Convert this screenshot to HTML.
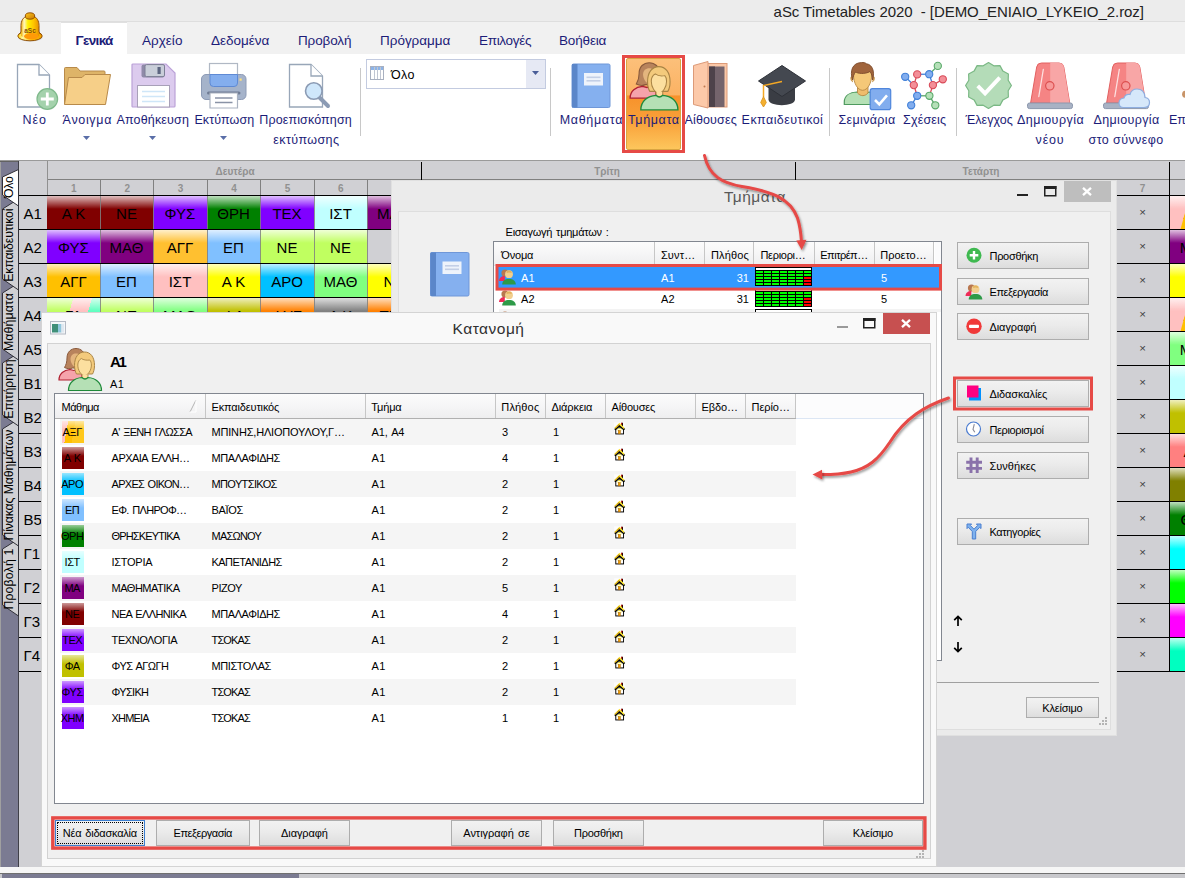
<!DOCTYPE html>
<html lang="el"><head><meta charset="utf-8"><title>aSc Timetables 2020</title><style>
html,body{margin:0;padding:0;}
body{width:1185px;height:878px;overflow:hidden;position:relative;background:#d0d0d4;font-family:"Liberation Sans",sans-serif;}
.a{position:absolute;box-sizing:border-box;}
.t{position:absolute;white-space:nowrap;font-family:"Liberation Sans",sans-serif;}
svg{position:absolute;overflow:visible;}

.cell{position:absolute;box-sizing:border-box;overflow:hidden;}
.btn{position:absolute;box-sizing:border-box;border:1px solid #adadad;background:linear-gradient(#f2f2f2,#ebebeb 45%,#dddddd 100%);}
.hdr{position:absolute;box-sizing:border-box;background:linear-gradient(#fcfcfc,#f5f5f6 55%,#eeeeef);border-right:1px solid #c6c6c6;}
</style></head><body>
<div class="a " style="left:0px;top:0px;width:1185px;height:22px;background:#ececec;"></div><div class="a " style="left:0px;top:22px;width:1185px;height:32px;background:#f1f1f1;"></div><div class="a " style="left:0px;top:21px;width:1185px;height:1px;background:#dedede;"></div><div class="a " style="left:61px;top:22px;width:66px;height:33px;background:#ffffff;border-top:1px solid #e0e0e0;"></div><div class="a " style="left:0px;top:54px;width:1185px;height:106px;background:#ffffff;"></div><span class="t" style="top:4.20px;font-size:15px;line-height:15px;color:#222;letter-spacing:-0.059px;left:773.60px;white-space:pre;">aSc Timetables 2020  - [DEMO_ENIAIO_LYKEIO_2.roz]</span><span class="t" style="top:34.27px;font-size:13.5px;line-height:13.5px;color:#1c1c78;font-weight:bold;letter-spacing:-0.674px;left:75.60px;">Γενικά</span><span class="t" style="top:34.27px;font-size:13.5px;line-height:13.5px;color:#1c1c78;letter-spacing:0.021px;left:142.00px;">Αρχείο</span><span class="t" style="top:34.27px;font-size:13.5px;line-height:13.5px;color:#1c1c78;left:211.00px;">Δεδομένα</span><span class="t" style="top:34.27px;font-size:13.5px;line-height:13.5px;color:#1c1c78;letter-spacing:-0.136px;left:298.00px;">Προβολή</span><span class="t" style="top:34.27px;font-size:13.5px;line-height:13.5px;color:#1c1c78;letter-spacing:-0.018px;left:380.00px;">Πρόγραμμα</span><span class="t" style="top:34.27px;font-size:13.5px;line-height:13.5px;color:#1c1c78;letter-spacing:-0.322px;left:479.00px;">Επιλογές</span><span class="t" style="top:34.27px;font-size:13.5px;line-height:13.5px;color:#1c1c78;letter-spacing:-0.160px;left:559.00px;">Βοήθεια</span><div class="a" style="left:626px;top:58px;width:55px;height:92px;border:1px solid #d9a441;border-radius:2px;background:linear-gradient(#fcc07a 0%,#fbb263 40%,#f7922b 41%,#f9a13a 70%,#fdc65c 100%);"></div><span class="t" style="top:114.32px;font-size:12.5px;line-height:12.5px;color:#1c1c78;letter-spacing:0.919px;left:22.50px;">Νέο</span><span class="t" style="top:114.32px;font-size:12.5px;line-height:12.5px;color:#1c1c78;letter-spacing:0.670px;left:62.60px;">Άνοιγμα</span><span class="t" style="top:114.32px;font-size:12.5px;line-height:12.5px;color:#1c1c78;letter-spacing:0.159px;left:116.50px;">Αποθήκευση</span><span class="t" style="top:114.32px;font-size:12.5px;line-height:12.5px;color:#1c1c78;letter-spacing:0.079px;left:194.40px;">Εκτύπωση</span><span class="t" style="top:114.32px;font-size:12.5px;line-height:12.5px;color:#1c1c78;letter-spacing:0.124px;left:259.30px;">Προεπισκόπηση</span><span class="t" style="top:133.62px;font-size:12.5px;line-height:12.5px;color:#1c1c78;letter-spacing:0.400px;left:273.30px;">εκτύπωσης</span><span class="t" style="top:114.32px;font-size:12.5px;line-height:12.5px;color:#1c1c78;letter-spacing:0.676px;left:559.70px;">Μαθήματα</span><span class="t" style="top:114.32px;font-size:12.5px;line-height:12.5px;color:#1c1c78;letter-spacing:0.617px;left:628.00px;">Τμήματα</span><span class="t" style="top:114.32px;font-size:12.5px;line-height:12.5px;color:#1c1c78;letter-spacing:0.147px;left:684.50px;">Αίθουσες</span><span class="t" style="top:114.32px;font-size:12.5px;line-height:12.5px;color:#1c1c78;letter-spacing:0.446px;left:741.60px;">Εκπαιδευτικοί</span><span class="t" style="top:114.32px;font-size:12.5px;line-height:12.5px;color:#1c1c78;letter-spacing:0.353px;left:838.50px;">Σεμινάρια</span><span class="t" style="top:114.32px;font-size:12.5px;line-height:12.5px;color:#1c1c78;letter-spacing:0.191px;left:903.00px;">Σχέσεις</span><span class="t" style="top:114.32px;font-size:12.5px;line-height:12.5px;color:#1c1c78;letter-spacing:0.070px;left:965.40px;">Έλεγχος</span><span class="t" style="top:114.32px;font-size:12.5px;line-height:12.5px;color:#1c1c78;letter-spacing:0.474px;left:1017.00px;">Δημιουργία</span><span class="t" style="top:133.62px;font-size:12.5px;line-height:12.5px;color:#1c1c78;letter-spacing:0.825px;left:1035.60px;">νέου</span><span class="t" style="top:114.32px;font-size:12.5px;line-height:12.5px;color:#1c1c78;letter-spacing:0.362px;left:1093.50px;">Δημιουργία</span><span class="t" style="top:133.62px;font-size:12.5px;line-height:12.5px;color:#1c1c78;letter-spacing:0.401px;left:1088.60px;">στο σύννεφο</span><span class="t" style="top:114.32px;font-size:12.5px;line-height:12.5px;color:#1c1c78;left:1169.00px;">Επεξεργασία</span><svg style="left:83.0px;top:135.5px" width="7" height="4"><path d="M0 0H7L3.5 4Z" fill="#5a6ea8"/></svg><svg style="left:149.0px;top:135.5px" width="7" height="4"><path d="M0 0H7L3.5 4Z" fill="#5a6ea8"/></svg><svg style="left:220.0px;top:135.5px" width="7" height="4"><path d="M0 0H7L3.5 4Z" fill="#5a6ea8"/></svg><div class="a " style="left:359.5px;top:68px;width:1px;height:68px;background:#c8c8c8;"></div><div class="a " style="left:550px;top:68px;width:1px;height:68px;background:#c8c8c8;"></div><div class="a " style="left:829px;top:68px;width:1px;height:68px;background:#c8c8c8;"></div><div class="a " style="left:955.5px;top:68px;width:1px;height:68px;background:#c8c8c8;"></div><div class="a" style="left:366px;top:59px;width:180px;height:30px;border:1px solid #c3cbe0;background:#fff;"></div><div class="a" style="left:526px;top:60px;width:19px;height:28px;background:#e6e9f4;"></div><svg style="left:532px;top:71px" width="7" height="4"><path d="M0 0H7L3.5 4Z" fill="#4a5e98"/></svg><svg style="left:370px;top:66px" width="14" height="14"><rect x="0.5" y="0.5" width="13" height="13" fill="#fff" stroke="#a8b0c0"/><rect x="1" y="1" width="12" height="3" fill="#8cb4e8"/><path d="M4.5 1V13M7.5 1V13M10.5 1V13" stroke="#c0c6d2" stroke-width="1"/></svg><span class="t" style="top:69.12px;font-size:12.5px;line-height:12.5px;color:#000;letter-spacing:0.348px;left:391.00px;">Όλο</span><div class="a " style="left:0px;top:160px;width:1185px;height:1px;background:#9a9a9a;"></div><div class="a " style="left:0px;top:161px;width:1185px;height:1px;background:#626262;"></div><div class="a " style="left:0px;top:162px;width:1px;height:705px;background:#a0a0a0;"></div><div class="a " style="left:1px;top:162px;width:17px;height:705px;background:#7b7b92;"></div><div class="a " style="left:18px;top:161px;width:1px;height:706px;background:#404048;"></div><div class="a " style="left:19px;top:161px;width:28px;height:706px;background:#d0d0d4;"></div><div class="a " style="left:47px;top:161px;width:1138px;height:18px;background:#d0d0d4;"></div><div class="a " style="left:47px;top:179px;width:1138px;height:1px;background:#808080;"></div><div class="a " style="left:47px;top:180px;width:1138px;height:15px;background:#d0d0d4;"></div><div class="a " style="left:47px;top:161px;width:1px;height:34px;background:#909090;"></div><div class="a " style="left:421px;top:162px;width:1px;height:18px;background:#000;"></div><div class="a " style="left:795px;top:162px;width:1px;height:18px;background:#000;"></div><div class="a " style="left:1169px;top:162px;width:1px;height:18px;background:#000;"></div><span class="t" style="top:167.23px;font-size:10px;line-height:10px;color:#909090;font-weight:bold;left:-15.00px;width:500px;text-align:center;">Δευτέρα</span><span class="t" style="top:167.23px;font-size:10px;line-height:10px;color:#909090;font-weight:bold;left:357.00px;width:500px;text-align:center;">Τρίτη</span><span class="t" style="top:167.23px;font-size:10px;line-height:10px;color:#909090;font-weight:bold;left:731.00px;width:500px;text-align:center;">Τετάρτη</span><span class="t" style="top:183.73px;font-size:10px;line-height:10px;color:#909090;font-weight:bold;left:-176.28px;width:500px;text-align:center;">1</span><div class="a " style="left:100px;top:180px;width:1px;height:15px;background:#808080;"></div><span class="t" style="top:183.73px;font-size:10px;line-height:10px;color:#909090;font-weight:bold;left:-122.85px;width:500px;text-align:center;">2</span><div class="a " style="left:153px;top:180px;width:1px;height:15px;background:#808080;"></div><span class="t" style="top:183.73px;font-size:10px;line-height:10px;color:#909090;font-weight:bold;left:-69.42px;width:500px;text-align:center;">3</span><div class="a " style="left:207px;top:180px;width:1px;height:15px;background:#808080;"></div><span class="t" style="top:183.73px;font-size:10px;line-height:10px;color:#909090;font-weight:bold;left:-16.00px;width:500px;text-align:center;">4</span><div class="a " style="left:260px;top:180px;width:1px;height:15px;background:#808080;"></div><span class="t" style="top:183.73px;font-size:10px;line-height:10px;color:#909090;font-weight:bold;left:37.44px;width:500px;text-align:center;">5</span><div class="a " style="left:314px;top:180px;width:1px;height:15px;background:#808080;"></div><span class="t" style="top:183.73px;font-size:10px;line-height:10px;color:#909090;font-weight:bold;left:90.86px;width:500px;text-align:center;">6</span><div class="a " style="left:367px;top:180px;width:1px;height:15px;background:#808080;"></div><span class="t" style="top:183.73px;font-size:10px;line-height:10px;color:#909090;font-weight:bold;left:892.50px;width:500px;text-align:center;">7</span><div class="cell" style="left:47.00px;top:196px;width:53.00px;height:33px;background:linear-gradient(rgba(255,255,255,0.75) 0px,rgba(255,255,255,0.0) 13px),#800000;"></div><span class="t" style="top:206.10px;font-size:15px;line-height:15px;color:#000;left:-176.50px;width:500px;text-align:center;">Α Κ</span><div class="cell" style="left:100.00px;top:196px;width:53.00px;height:33px;background:linear-gradient(rgba(255,255,255,0.75) 0px,rgba(255,255,255,0.0) 13px),#800000;"></div><span class="t" style="top:206.10px;font-size:15px;line-height:15px;color:#000;left:-123.50px;width:500px;text-align:center;">ΝΕ</span><div class="cell" style="left:153.00px;top:196px;width:54.00px;height:33px;background:linear-gradient(rgba(255,255,255,0.75) 0px,rgba(255,255,255,0.0) 13px),#8000ff;"></div><span class="t" style="top:206.10px;font-size:15px;line-height:15px;color:#000;left:-70.00px;width:500px;text-align:center;">ΦΥΣ</span><div class="cell" style="left:207.00px;top:196px;width:53.00px;height:33px;background:linear-gradient(rgba(255,255,255,0.75) 0px,rgba(255,255,255,0.0) 13px),#008000;"></div><span class="t" style="top:206.10px;font-size:15px;line-height:15px;color:#000;left:-16.50px;width:500px;text-align:center;">ΘΡΗ</span><div class="cell" style="left:260.00px;top:196px;width:54.00px;height:33px;background:linear-gradient(rgba(255,255,255,0.75) 0px,rgba(255,255,255,0.0) 13px),#8000ff;"></div><span class="t" style="top:206.10px;font-size:15px;line-height:15px;color:#000;left:37.00px;width:500px;text-align:center;">ΤΕΧ</span><div class="cell" style="left:314.00px;top:196px;width:53.00px;height:33px;background:linear-gradient(rgba(255,255,255,0.75) 0px,rgba(255,255,255,0.0) 13px),#c0ffff;"></div><span class="t" style="top:206.10px;font-size:15px;line-height:15px;color:#000;left:90.50px;width:500px;text-align:center;">ΙΣΤ</span><div class="cell" style="left:367.00px;top:196px;width:54.00px;height:33px;background:linear-gradient(rgba(255,255,255,0.75) 0px,rgba(255,255,255,0.0) 13px),#800080;"></div><span class="t" style="top:206.10px;font-size:15px;line-height:15px;color:#000;left:144.00px;width:500px;text-align:center;">ΜΑΘ</span><div class="a " style="left:100px;top:196px;width:1px;height:33px;background:rgba(128,128,128,0.85);"></div><div class="a " style="left:153px;top:196px;width:1px;height:33px;background:rgba(128,128,128,0.85);"></div><div class="a " style="left:207px;top:196px;width:1px;height:33px;background:rgba(128,128,128,0.85);"></div><div class="a " style="left:260px;top:196px;width:1px;height:33px;background:rgba(128,128,128,0.85);"></div><div class="a " style="left:314px;top:196px;width:1px;height:33px;background:rgba(128,128,128,0.85);"></div><div class="a " style="left:367px;top:196px;width:1px;height:33px;background:rgba(128,128,128,0.85);"></div><div class="cell" style="left:47.00px;top:230px;width:53.00px;height:33px;background:linear-gradient(rgba(255,255,255,0.75) 0px,rgba(255,255,255,0.0) 13px),#8000ff;"></div><span class="t" style="top:240.10px;font-size:15px;line-height:15px;color:#000;left:-176.50px;width:500px;text-align:center;">ΦΥΣ</span><div class="cell" style="left:100.00px;top:230px;width:53.00px;height:33px;background:linear-gradient(rgba(255,255,255,0.75) 0px,rgba(255,255,255,0.0) 13px),#800080;"></div><span class="t" style="top:240.10px;font-size:15px;line-height:15px;color:#000;left:-123.50px;width:500px;text-align:center;">ΜΑΘ</span><div class="cell" style="left:153.00px;top:230px;width:54.00px;height:33px;background:linear-gradient(rgba(255,255,255,0.75) 0px,rgba(255,255,255,0.0) 13px),#ffc030;"></div><span class="t" style="top:240.10px;font-size:15px;line-height:15px;color:#000;left:-70.00px;width:500px;text-align:center;">ΑΓΓ</span><div class="cell" style="left:207.00px;top:230px;width:53.00px;height:33px;background:linear-gradient(rgba(255,255,255,0.75) 0px,rgba(255,255,255,0.0) 13px),#80c0ff;"></div><span class="t" style="top:240.10px;font-size:15px;line-height:15px;color:#000;left:-16.50px;width:500px;text-align:center;">ΕΠ</span><div class="cell" style="left:260.00px;top:230px;width:54.00px;height:33px;background:linear-gradient(rgba(255,255,255,0.75) 0px,rgba(255,255,255,0.0) 13px),#c0ff60;"></div><span class="t" style="top:240.10px;font-size:15px;line-height:15px;color:#000;left:37.00px;width:500px;text-align:center;">ΝΕ</span><div class="cell" style="left:314.00px;top:230px;width:53.00px;height:33px;background:linear-gradient(rgba(255,255,255,0.75) 0px,rgba(255,255,255,0.0) 13px),#c0ff60;"></div><span class="t" style="top:240.10px;font-size:15px;line-height:15px;color:#000;left:90.50px;width:500px;text-align:center;">ΝΕ</span><div class="a " style="left:100px;top:230px;width:1px;height:33px;background:rgba(128,128,128,0.85);"></div><div class="a " style="left:153px;top:230px;width:1px;height:33px;background:rgba(128,128,128,0.85);"></div><div class="a " style="left:207px;top:230px;width:1px;height:33px;background:rgba(128,128,128,0.85);"></div><div class="a " style="left:260px;top:230px;width:1px;height:33px;background:rgba(128,128,128,0.85);"></div><div class="a " style="left:314px;top:230px;width:1px;height:33px;background:rgba(128,128,128,0.85);"></div><div class="a " style="left:367px;top:230px;width:1px;height:33px;background:rgba(128,128,128,0.85);"></div><div class="cell" style="left:47.00px;top:264px;width:53.00px;height:33px;background:linear-gradient(rgba(255,255,255,0.75) 0px,rgba(255,255,255,0.0) 13px),#ffc000;"></div><span class="t" style="top:274.10px;font-size:15px;line-height:15px;color:#000;left:-176.50px;width:500px;text-align:center;">ΑΓΓ</span><div class="cell" style="left:100.00px;top:264px;width:53.00px;height:33px;background:linear-gradient(rgba(255,255,255,0.75) 0px,rgba(255,255,255,0.0) 13px),#80c0ff;"></div><span class="t" style="top:274.10px;font-size:15px;line-height:15px;color:#000;left:-123.50px;width:500px;text-align:center;">ΕΠ</span><div class="cell" style="left:153.00px;top:264px;width:54.00px;height:33px;background:linear-gradient(rgba(255,255,255,0.75) 0px,rgba(255,255,255,0.0) 13px),#ffc0c0;"></div><span class="t" style="top:274.10px;font-size:15px;line-height:15px;color:#000;left:-70.00px;width:500px;text-align:center;">ΙΣΤ</span><div class="cell" style="left:207.00px;top:264px;width:53.00px;height:33px;background:linear-gradient(rgba(255,255,255,0.75) 0px,rgba(255,255,255,0.0) 13px),#ffff00;"></div><span class="t" style="top:274.10px;font-size:15px;line-height:15px;color:#000;left:-16.50px;width:500px;text-align:center;">Α Κ</span><div class="cell" style="left:260.00px;top:264px;width:54.00px;height:33px;background:linear-gradient(rgba(255,255,255,0.75) 0px,rgba(255,255,255,0.0) 13px),#00c0ff;"></div><span class="t" style="top:274.10px;font-size:15px;line-height:15px;color:#000;left:37.00px;width:500px;text-align:center;">ΑΡΟ</span><div class="cell" style="left:314.00px;top:264px;width:53.00px;height:33px;background:linear-gradient(rgba(255,255,255,0.75) 0px,rgba(255,255,255,0.0) 13px),#80ff80;"></div><span class="t" style="top:274.10px;font-size:15px;line-height:15px;color:#000;left:90.50px;width:500px;text-align:center;">ΜΑΘ</span><div class="cell" style="left:367.00px;top:264px;width:54.00px;height:33px;background:linear-gradient(rgba(255,255,255,0.75) 0px,rgba(255,255,255,0.0) 13px),#ffff00;"></div><span class="t" style="top:274.10px;font-size:15px;line-height:15px;color:#000;left:144.00px;width:500px;text-align:center;">ΝΕ</span><div class="a " style="left:100px;top:264px;width:1px;height:33px;background:rgba(128,128,128,0.85);"></div><div class="a " style="left:153px;top:264px;width:1px;height:33px;background:rgba(128,128,128,0.85);"></div><div class="a " style="left:207px;top:264px;width:1px;height:33px;background:rgba(128,128,128,0.85);"></div><div class="a " style="left:260px;top:264px;width:1px;height:33px;background:rgba(128,128,128,0.85);"></div><div class="a " style="left:314px;top:264px;width:1px;height:33px;background:rgba(128,128,128,0.85);"></div><div class="a " style="left:367px;top:264px;width:1px;height:33px;background:rgba(128,128,128,0.85);"></div><div class="cell" style="left:47.00px;top:298px;width:53.00px;height:33px;background:linear-gradient(rgba(255,255,255,0.75) 0px,rgba(255,255,255,0) 13px),linear-gradient(106deg,#c0ff60 0,#c0ff60 42%,#ffc0c0 42%,#ffc0c0 72%,#60ffc0 72%);"></div><span class="t" style="top:308.10px;font-size:15px;line-height:15px;color:#000;left:-176.50px;width:500px;text-align:center;">ΓΑ</span><div class="cell" style="left:100.00px;top:298px;width:53.00px;height:33px;background:linear-gradient(rgba(255,255,255,0.75) 0px,rgba(255,255,255,0.0) 13px),#c0ff60;"></div><span class="t" style="top:308.10px;font-size:15px;line-height:15px;color:#000;left:-123.50px;width:500px;text-align:center;">ΝΕ</span><div class="cell" style="left:153.00px;top:298px;width:54.00px;height:33px;background:linear-gradient(rgba(255,255,255,0.75) 0px,rgba(255,255,255,0.0) 13px),#80ff80;"></div><span class="t" style="top:308.10px;font-size:15px;line-height:15px;color:#000;left:-70.00px;width:500px;text-align:center;">ΜΑΘ</span><div class="cell" style="left:207.00px;top:298px;width:53.00px;height:33px;background:linear-gradient(rgba(255,255,255,0.75) 0px,rgba(255,255,255,0.0) 13px),#c0c000;"></div><span class="t" style="top:308.10px;font-size:15px;line-height:15px;color:#000;left:-16.50px;width:500px;text-align:center;">ΦΑ</span><div class="cell" style="left:260.00px;top:298px;width:54.00px;height:33px;background:linear-gradient(rgba(255,255,255,0.75) 0px,rgba(255,255,255,0.0) 13px),#ff8000;"></div><span class="t" style="top:308.10px;font-size:15px;line-height:15px;color:#000;left:37.00px;width:500px;text-align:center;">ΦΥΣ</span><div class="cell" style="left:314.00px;top:298px;width:53.00px;height:33px;background:linear-gradient(rgba(255,255,255,0.75) 0px,rgba(255,255,255,0.0) 13px),#808080;"></div><span class="t" style="top:308.10px;font-size:15px;line-height:15px;color:#000;left:90.50px;width:500px;text-align:center;">Α Κ</span><div class="cell" style="left:367.00px;top:298px;width:54.00px;height:33px;background:linear-gradient(rgba(255,255,255,0.75) 0px,rgba(255,255,255,0.0) 13px),#ff8000;"></div><span class="t" style="top:308.10px;font-size:15px;line-height:15px;color:#000;left:144.00px;width:500px;text-align:center;">ΤΕΧ</span><div class="a " style="left:100px;top:298px;width:1px;height:33px;background:rgba(128,128,128,0.85);"></div><div class="a " style="left:153px;top:298px;width:1px;height:33px;background:rgba(128,128,128,0.85);"></div><div class="a " style="left:207px;top:298px;width:1px;height:33px;background:rgba(128,128,128,0.85);"></div><div class="a " style="left:260px;top:298px;width:1px;height:33px;background:rgba(128,128,128,0.85);"></div><div class="a " style="left:314px;top:298px;width:1px;height:33px;background:rgba(128,128,128,0.85);"></div><div class="a " style="left:367px;top:298px;width:1px;height:33px;background:rgba(128,128,128,0.85);"></div><div class="cell" style="left:1170.00px;top:196px;width:53.43px;height:33px;background:linear-gradient(rgba(255,255,255,0.75) 0px,rgba(255,255,255,0.0) 13px),#ffc0c0;"></div><span class="t" style="top:206.10px;font-size:15px;line-height:15px;color:#000;left:946.71px;width:500px;text-align:center;">ΑΓΓ</span><span class="t" style="top:206.77px;font-size:11.5px;line-height:11.5px;color:#404040;left:892.50px;width:500px;text-align:center;">×</span><div class="cell" style="left:1170.00px;top:230px;width:53.43px;height:33px;background:linear-gradient(rgba(255,255,255,0.75) 0px,rgba(255,255,255,0.0) 13px),#800080;"></div><span class="t" style="top:240.10px;font-size:15px;line-height:15px;color:#000;left:946.71px;width:500px;text-align:center;">ΜΑΘ</span><span class="t" style="top:240.77px;font-size:11.5px;line-height:11.5px;color:#404040;left:892.50px;width:500px;text-align:center;">×</span><div class="cell" style="left:1170.00px;top:264px;width:53.43px;height:33px;background:linear-gradient(rgba(255,255,255,0.75) 0px,rgba(255,255,255,0.0) 13px),#ffff00;"></div><span class="t" style="top:274.77px;font-size:11.5px;line-height:11.5px;color:#404040;left:892.50px;width:500px;text-align:center;">×</span><div class="cell" style="left:1170.00px;top:298px;width:53.43px;height:33px;background:linear-gradient(rgba(255,255,255,0.75) 0px,rgba(255,255,255,0.0) 13px),#ffc0c0;"></div><span class="t" style="top:308.10px;font-size:15px;line-height:15px;color:#000;left:946.71px;width:500px;text-align:center;">ΑΓΓ</span><span class="t" style="top:308.77px;font-size:11.5px;line-height:11.5px;color:#404040;left:892.50px;width:500px;text-align:center;">×</span><div class="cell" style="left:1170.00px;top:332px;width:53.43px;height:33px;background:linear-gradient(rgba(255,255,255,0.75) 0px,rgba(255,255,255,0.0) 13px),#80ff80;"></div><span class="t" style="top:342.10px;font-size:15px;line-height:15px;color:#000;left:946.71px;width:500px;text-align:center;">ΜΑΘ</span><span class="t" style="top:342.77px;font-size:11.5px;line-height:11.5px;color:#404040;left:892.50px;width:500px;text-align:center;">×</span><div class="cell" style="left:1170.00px;top:366px;width:53.43px;height:33px;background:linear-gradient(rgba(255,255,255,0.75) 0px,rgba(255,255,255,0.0) 13px),#c0ffff;"></div><span class="t" style="top:376.77px;font-size:11.5px;line-height:11.5px;color:#404040;left:892.50px;width:500px;text-align:center;">×</span><div class="cell" style="left:1170.00px;top:400px;width:53.43px;height:33px;background:linear-gradient(rgba(255,255,255,0.75) 0px,rgba(255,255,255,0.0) 13px),#c0c000;"></div><span class="t" style="top:410.77px;font-size:11.5px;line-height:11.5px;color:#404040;left:892.50px;width:500px;text-align:center;">×</span><div class="cell" style="left:1170.00px;top:434px;width:53.43px;height:33px;background:linear-gradient(rgba(255,255,255,0.75) 0px,rgba(255,255,255,0.0) 13px),#ff8080;"></div><span class="t" style="top:444.10px;font-size:15px;line-height:15px;color:#000;left:946.71px;width:500px;text-align:center;">ΑΓΓ</span><span class="t" style="top:444.77px;font-size:11.5px;line-height:11.5px;color:#404040;left:892.50px;width:500px;text-align:center;">×</span><div class="cell" style="left:1170.00px;top:468px;width:53.43px;height:33px;background:linear-gradient(rgba(255,255,255,0.75) 0px,rgba(255,255,255,0.0) 13px),#808000;"></div><span class="t" style="top:478.77px;font-size:11.5px;line-height:11.5px;color:#404040;left:892.50px;width:500px;text-align:center;">×</span><div class="cell" style="left:1170.00px;top:502px;width:53.43px;height:33px;background:linear-gradient(rgba(255,255,255,0.75) 0px,rgba(255,255,255,0.0) 13px),#008000;"></div><span class="t" style="top:512.10px;font-size:15px;line-height:15px;color:#000;left:946.71px;width:500px;text-align:center;">ΘΡΗ</span><span class="t" style="top:512.77px;font-size:11.5px;line-height:11.5px;color:#404040;left:892.50px;width:500px;text-align:center;">×</span><div class="cell" style="left:1170.00px;top:536px;width:53.43px;height:33px;background:linear-gradient(rgba(255,255,255,0.75) 0px,rgba(255,255,255,0.0) 13px),#00ffff;"></div><span class="t" style="top:546.77px;font-size:11.5px;line-height:11.5px;color:#404040;left:892.50px;width:500px;text-align:center;">×</span><div class="cell" style="left:1170.00px;top:570px;width:53.43px;height:33px;background:linear-gradient(rgba(255,255,255,0.75) 0px,rgba(255,255,255,0.0) 13px),#00ff00;"></div><span class="t" style="top:580.77px;font-size:11.5px;line-height:11.5px;color:#404040;left:892.50px;width:500px;text-align:center;">×</span><div class="cell" style="left:1170.00px;top:604px;width:53.43px;height:33px;background:linear-gradient(rgba(255,255,255,0.75) 0px,rgba(255,255,255,0.0) 13px),#ff00ff;"></div><span class="t" style="top:614.77px;font-size:11.5px;line-height:11.5px;color:#404040;left:892.50px;width:500px;text-align:center;">×</span><div class="cell" style="left:1170.00px;top:638px;width:53.43px;height:33px;background:linear-gradient(rgba(255,255,255,0.75) 0px,rgba(255,255,255,0.0) 13px),#00ffc0;"></div><span class="t" style="top:648.77px;font-size:11.5px;line-height:11.5px;color:#404040;left:892.50px;width:500px;text-align:center;">×</span><svg style="left:1170px;top:196px" width="15" height="33"><path d="M15 17L15 33L10.500 33Z" fill="#ffc000"/></svg><svg style="left:1170px;top:298px" width="15" height="33"><path d="M15 17L15 33L10.500 33Z" fill="#ffc000"/></svg><div class="a " style="left:1169px;top:180px;width:1px;height:492px;background:#000;"></div><div class="a " style="left:19px;top:195px;width:1166px;height:1px;background:#000;"></div><div class="a " style="left:19px;top:229px;width:1166px;height:1px;background:#000;"></div><div class="a " style="left:19px;top:263px;width:1166px;height:1px;background:#000;"></div><div class="a " style="left:19px;top:297px;width:1166px;height:1px;background:#000;"></div><div class="a " style="left:19px;top:331px;width:1166px;height:1px;background:#000;"></div><div class="a " style="left:19px;top:365px;width:1166px;height:1px;background:#000;"></div><div class="a " style="left:19px;top:399px;width:1166px;height:1px;background:#000;"></div><div class="a " style="left:19px;top:433px;width:1166px;height:1px;background:#000;"></div><div class="a " style="left:19px;top:467px;width:1166px;height:1px;background:#000;"></div><div class="a " style="left:19px;top:501px;width:1166px;height:1px;background:#000;"></div><div class="a " style="left:19px;top:535px;width:1166px;height:1px;background:#000;"></div><div class="a " style="left:19px;top:569px;width:1166px;height:1px;background:#000;"></div><div class="a " style="left:19px;top:603px;width:1166px;height:1px;background:#000;"></div><div class="a " style="left:19px;top:637px;width:1166px;height:1px;background:#000;"></div><div class="a " style="left:19px;top:671px;width:1166px;height:1px;background:#000;"></div><span class="t" style="top:206.00px;font-size:15px;line-height:15px;color:#000;left:23.50px;">Α1</span><span class="t" style="top:240.00px;font-size:15px;line-height:15px;color:#000;left:23.50px;">Α2</span><span class="t" style="top:274.00px;font-size:15px;line-height:15px;color:#000;left:23.50px;">Α3</span><span class="t" style="top:308.00px;font-size:15px;line-height:15px;color:#000;left:23.50px;">Α4</span><span class="t" style="top:342.00px;font-size:15px;line-height:15px;color:#000;left:23.50px;">Α5</span><span class="t" style="top:376.00px;font-size:15px;line-height:15px;color:#000;left:23.50px;">Β1</span><span class="t" style="top:410.00px;font-size:15px;line-height:15px;color:#000;left:23.50px;">Β2</span><span class="t" style="top:444.00px;font-size:15px;line-height:15px;color:#000;left:23.50px;">Β3</span><span class="t" style="top:478.00px;font-size:15px;line-height:15px;color:#000;left:23.50px;">Β4</span><span class="t" style="top:512.00px;font-size:15px;line-height:15px;color:#000;left:23.50px;">Β5</span><span class="t" style="top:546.00px;font-size:15px;line-height:15px;color:#000;left:23.50px;">Γ1</span><span class="t" style="top:580.00px;font-size:15px;line-height:15px;color:#000;left:23.50px;">Γ2</span><span class="t" style="top:614.00px;font-size:15px;line-height:15px;color:#000;left:23.50px;">Γ3</span><span class="t" style="top:648.00px;font-size:15px;line-height:15px;color:#000;left:23.50px;">Γ4</span><div class="a " style="left:47px;top:672px;width:1138px;height:195px;background:#d0d0d4;"></div><div class="a " style="left:0px;top:867px;width:1185px;height:6px;background:#f6f6f6;"></div><div class="a " style="left:0px;top:872.5px;width:1185px;height:1px;background:#707070;"></div><div class="a " style="left:0px;top:873.5px;width:1185px;height:5px;background:#c8c8cc;"></div><div class="a " style="left:1.5px;top:873.5px;width:297.5px;height:5px;background:#7b7b92;"></div><svg style="left:0;top:0" width="20" height="878"><path d="M18.5 539L2.5 549L2.5 605L18.5 616Z" fill="#d0d0d4" stroke="#303038" stroke-width="1"/><path d="M18.5 419L2.5 429L2.5 535L18.5 546Z" fill="#d0d0d4" stroke="#303038" stroke-width="1"/><path d="M18.5 353L2.5 363L2.5 415L18.5 426Z" fill="#d0d0d4" stroke="#303038" stroke-width="1"/><path d="M18.5 283L2.5 293L2.5 349L18.5 360Z" fill="#d0d0d4" stroke="#303038" stroke-width="1"/><path d="M18.5 199L2.5 209L2.5 279L18.5 290Z" fill="#d0d0d4" stroke="#303038" stroke-width="1"/><path d="M18.5 169.5L2.5 177L2.5 195L18.5 206Z" fill="#ffffff" stroke="#303038" stroke-width="1"/></svg><span class="t" style="top:181.10px;font-size:12.3px;line-height:12.3px;color:#000;letter-spacing:-0.214px;left:-240.60px;width:500px;text-align:center;text-indent:-0.214px;transform:rotate(-90deg);transform-origin:50% 50%;">Όλο</span><span class="t" style="top:239.35px;font-size:12.3px;line-height:12.3px;color:#000;letter-spacing:-0.110px;left:-240.60px;width:500px;text-align:center;text-indent:-0.110px;transform:rotate(-90deg);transform-origin:50% 50%;">Εκπαιδευτικοί</span><span class="t" style="top:315.60px;font-size:12.3px;line-height:12.3px;color:#000;letter-spacing:0.124px;left:-240.60px;width:500px;text-align:center;text-indent:0.124px;transform:rotate(-90deg);transform-origin:50% 50%;">Μαθήματα</span><span class="t" style="top:383.35px;font-size:12.3px;line-height:12.3px;color:#000;left:-240.60px;width:500px;text-align:center;text-indent:0.001px;transform:rotate(-90deg);transform-origin:50% 50%;">Επιτήρηση</span><span class="t" style="top:479.10px;font-size:12.3px;line-height:12.3px;color:#000;letter-spacing:-0.130px;left:-240.60px;width:500px;text-align:center;text-indent:-0.130px;transform:rotate(-90deg);transform-origin:50% 50%;">Πίνακας Μαθημάτων</span><span class="t" style="top:573.10px;font-size:12.3px;line-height:12.3px;color:#000;letter-spacing:0.157px;left:-240.60px;width:500px;text-align:center;text-indent:0.157px;transform:rotate(-90deg);transform-origin:50% 50%;">Προβολή 1</span><div class="a" style="left:391px;top:180px;width:726px;height:556px;background:#ebebeb;border:1px solid #e0e0e0;box-shadow:0 0 0 0 #000;"></div><div class="a" style="left:398px;top:211px;width:713px;height:519px;background:#f0f0f0;border:1px solid #dedede;"></div><span class="t" style="top:188.58px;font-size:15.5px;line-height:15.5px;color:#585858;letter-spacing:0.460px;left:724.00px;">Τμήματα</span><div class="a " style="left:1064px;top:181px;width:47px;height:21px;background:#bebebe;"></div><svg style="left:1081px;top:186px" width="12" height="11"><path d="M2 1.800L10 9.200M10 1.800L2 9.200" stroke="#fff" stroke-width="2.300"/></svg><svg style="left:1044px;top:186px" width="13" height="11"><rect x="0.75" y="0.75" width="11" height="9" fill="none" stroke="#222" stroke-width="1.5"/><rect x="0" y="0" width="12.5" height="3" fill="#222"/></svg><div class="a " style="left:1017px;top:194px;width:11px;height:2px;background:#222;"></div><svg style="left:430px;top:252px" width="40" height="45"><rect x="0.5" y="0.5" width="38.5" height="43.5" rx="1.5" fill="#85b0ef" stroke="#6f97d8"/><rect x="0.5" y="0.5" width="5.5" height="43.5" fill="#5b86c9"/><rect x="12.5" y="9.5" width="19" height="12.5" fill="#eef3fb"/><rect x="15" y="13" width="14" height="1.6" fill="#c3cfe6"/><rect x="15" y="16.5" width="14" height="1.6" fill="#c3cfe6"/></svg><span class="t" style="top:227.09px;font-size:11.0px;line-height:11.0px;color:#000;letter-spacing:-0.266px;left:505.60px;word-spacing:1.2px;">Εισαγωγή τμημάτων :</span><div class="a" style="left:493px;top:241px;width:449px;height:420px;background:#fff;border:1px solid #828790;"></div><div class="hdr" style="left:494px;top:242px;width:160.7px;height:23px;"></div><span class="t" style="top:250.39px;font-size:11.0px;line-height:11.0px;color:#000;letter-spacing:-0.186px;left:501.30px;">Όνομα</span><div class="hdr" style="left:654.7px;top:242px;width:49.9px;height:23px;"></div><span class="t" style="top:250.39px;font-size:11.0px;line-height:11.0px;color:#000;letter-spacing:0.182px;left:660.90px;">Συντ…</span><div class="hdr" style="left:704.6px;top:242px;width:49.8px;height:23px;"></div><span class="t" style="top:250.39px;font-size:11.0px;line-height:11.0px;color:#000;letter-spacing:0.158px;left:711.00px;">Πλήθος</span><div class="hdr" style="left:754.4px;top:242px;width:60.2px;height:23px;"></div><span class="t" style="top:250.39px;font-size:11.0px;line-height:11.0px;color:#000;letter-spacing:-0.282px;left:760.40px;">Περιορι…</span><div class="hdr" style="left:814.6px;top:242px;width:60.2px;height:23px;"></div><span class="t" style="top:250.39px;font-size:11.0px;line-height:11.0px;color:#000;letter-spacing:-0.510px;left:820.30px;">Επιτρέπ…</span><div class="hdr" style="left:874.8px;top:242px;width:59.7px;height:23px;"></div><span class="t" style="top:250.39px;font-size:11.0px;line-height:11.0px;color:#000;letter-spacing:-0.022px;left:880.30px;">Προετο…</span><div class="a " style="left:934.5px;top:242px;width:6.5px;height:23px;background:#fbfbfc;"></div><div class="a " style="left:494px;top:265px;width:447px;height:1px;background:#e0e4ea;"></div><div class="a " style="left:496px;top:266.5px;width:445px;height:21px;background:#3399ff;"></div><svg style="left:499px;top:268.3px" width="17" height="17" viewBox="0 0 17 17"><circle cx="6" cy="5" r="3.6" fill="#b9774f"/><path d="M0 13c0-3 2.4-5 5.8-5V13Z" fill="#ee2c58"/><circle cx="10" cy="6.2" r="3.9" fill="#f2cf8e"/><path d="M7.3 3.6c1.6-1.4 4-1.4 5.6 0.4L12.3 5c-1.4-.8-3-.8-4.5 0Z" fill="#e3b25e"/><path d="M3.2 16.6c0-3.6 2.6-5.6 6.8-5.6s6.8 2 6.8 5.6Z" fill="#2e9a48"/></svg><span class="t" style="top:273.09px;font-size:11.0px;line-height:11.0px;color:#fff;letter-spacing:0.231px;left:521.00px;">Α1</span><span class="t" style="top:273.09px;font-size:11.0px;line-height:11.0px;color:#fff;letter-spacing:0.231px;left:661.00px;">Α1</span><span class="t" style="top:273.09px;font-size:11.0px;line-height:11.0px;color:#fff;left:249.00px;width:500px;text-align:right;">31</span><span class="t" style="top:273.09px;font-size:11.0px;line-height:11.0px;color:#fff;left:881.00px;">5</span><svg style="left:499px;top:289.3px" width="17" height="17" viewBox="0 0 17 17"><circle cx="6" cy="5" r="3.6" fill="#b9774f"/><path d="M0 13c0-3 2.4-5 5.8-5V13Z" fill="#ee2c58"/><circle cx="10" cy="6.2" r="3.9" fill="#f2cf8e"/><path d="M7.3 3.6c1.6-1.4 4-1.4 5.6 0.4L12.3 5c-1.4-.8-3-.8-4.5 0Z" fill="#e3b25e"/><path d="M3.2 16.6c0-3.6 2.6-5.6 6.8-5.6s6.8 2 6.8 5.6Z" fill="#2e9a48"/></svg><span class="t" style="top:294.09px;font-size:11.0px;line-height:11.0px;color:#000;letter-spacing:0.231px;left:521.00px;">Α2</span><span class="t" style="top:294.09px;font-size:11.0px;line-height:11.0px;color:#000;letter-spacing:0.231px;left:661.00px;">Α2</span><span class="t" style="top:294.09px;font-size:11.0px;line-height:11.0px;color:#000;left:249.00px;width:500px;text-align:right;">31</span><span class="t" style="top:294.09px;font-size:11.0px;line-height:11.0px;color:#000;left:881.00px;">5</span><div class="a " style="left:499px;top:309px;width:442px;height:3px;background:#f3f3f3;"></div><svg style="left:755px;top:267px" width="57" height="19" shape-rendering="crispEdges"><rect width="57" height="19" fill="#000"/><rect x="1" y="1" width="55" height="2" fill="#fff"/><rect x="1" y="4" width="7" height="2" fill="#00ff00"/><rect x="1" y="7" width="7" height="2" fill="#00ff00"/><rect x="1" y="10" width="7" height="2" fill="#00ff00"/><rect x="1" y="13" width="7" height="2" fill="#00ff00"/><rect x="1" y="16" width="7" height="2" fill="#00ff00"/><rect x="9" y="4" width="7" height="2" fill="#00ff00"/><rect x="9" y="7" width="7" height="2" fill="#00ff00"/><rect x="9" y="10" width="7" height="2" fill="#00ff00"/><rect x="9" y="13" width="7" height="2" fill="#00ff00"/><rect x="9" y="16" width="7" height="2" fill="#00ff00"/><rect x="17" y="4" width="7" height="2" fill="#00ff00"/><rect x="17" y="7" width="7" height="2" fill="#00ff00"/><rect x="17" y="10" width="7" height="2" fill="#00ff00"/><rect x="17" y="13" width="7" height="2" fill="#00ff00"/><rect x="17" y="16" width="7" height="2" fill="#00ff00"/><rect x="25" y="4" width="7" height="2" fill="#00ff00"/><rect x="25" y="7" width="7" height="2" fill="#00ff00"/><rect x="25" y="10" width="7" height="2" fill="#00ff00"/><rect x="25" y="13" width="7" height="2" fill="#00ff00"/><rect x="25" y="16" width="7" height="2" fill="#00ff00"/><rect x="33" y="4" width="7" height="2" fill="#00ff00"/><rect x="33" y="7" width="7" height="2" fill="#00ff00"/><rect x="33" y="10" width="7" height="2" fill="#00ff00"/><rect x="33" y="13" width="7" height="2" fill="#00ff00"/><rect x="33" y="16" width="7" height="2" fill="#00ff00"/><rect x="41" y="4" width="7" height="2" fill="#00ff00"/><rect x="41" y="7" width="7" height="2" fill="#00ff00"/><rect x="41" y="10" width="7" height="2" fill="#00ff00"/><rect x="41" y="13" width="7" height="2" fill="#00ff00"/><rect x="41" y="16" width="7" height="2" fill="#00ff00"/><rect x="49" y="4" width="7" height="2" fill="#00ff00"/><rect x="49" y="7" width="7" height="2" fill="#00ff00"/><rect x="49" y="10" width="7" height="2" fill="#ff0000"/><rect x="49" y="13" width="7" height="2" fill="#ff0000"/><rect x="49" y="16" width="7" height="2" fill="#ff0000"/></svg><svg style="left:755px;top:288px" width="57" height="19" shape-rendering="crispEdges"><rect width="57" height="19" fill="#000"/><rect x="1" y="1" width="55" height="2" fill="#fff"/><rect x="1" y="4" width="7" height="2" fill="#00ff00"/><rect x="1" y="7" width="7" height="2" fill="#00ff00"/><rect x="1" y="10" width="7" height="2" fill="#00ff00"/><rect x="1" y="13" width="7" height="2" fill="#00ff00"/><rect x="1" y="16" width="7" height="2" fill="#00ff00"/><rect x="9" y="4" width="7" height="2" fill="#00ff00"/><rect x="9" y="7" width="7" height="2" fill="#00ff00"/><rect x="9" y="10" width="7" height="2" fill="#00ff00"/><rect x="9" y="13" width="7" height="2" fill="#00ff00"/><rect x="9" y="16" width="7" height="2" fill="#00ff00"/><rect x="17" y="4" width="7" height="2" fill="#00ff00"/><rect x="17" y="7" width="7" height="2" fill="#00ff00"/><rect x="17" y="10" width="7" height="2" fill="#00ff00"/><rect x="17" y="13" width="7" height="2" fill="#00ff00"/><rect x="17" y="16" width="7" height="2" fill="#00ff00"/><rect x="25" y="4" width="7" height="2" fill="#00ff00"/><rect x="25" y="7" width="7" height="2" fill="#00ff00"/><rect x="25" y="10" width="7" height="2" fill="#00ff00"/><rect x="25" y="13" width="7" height="2" fill="#00ff00"/><rect x="25" y="16" width="7" height="2" fill="#00ff00"/><rect x="33" y="4" width="7" height="2" fill="#00ff00"/><rect x="33" y="7" width="7" height="2" fill="#00ff00"/><rect x="33" y="10" width="7" height="2" fill="#00ff00"/><rect x="33" y="13" width="7" height="2" fill="#00ff00"/><rect x="33" y="16" width="7" height="2" fill="#00ff00"/><rect x="41" y="4" width="7" height="2" fill="#00ff00"/><rect x="41" y="7" width="7" height="2" fill="#00ff00"/><rect x="41" y="10" width="7" height="2" fill="#00ff00"/><rect x="41" y="13" width="7" height="2" fill="#00ff00"/><rect x="41" y="16" width="7" height="2" fill="#00ff00"/><rect x="49" y="4" width="7" height="2" fill="#00ff00"/><rect x="49" y="7" width="7" height="2" fill="#00ff00"/><rect x="49" y="10" width="7" height="2" fill="#ff0000"/><rect x="49" y="13" width="7" height="2" fill="#ff0000"/><rect x="49" y="16" width="7" height="2" fill="#ff0000"/></svg><svg style="left:755px;top:309px" width="57" height="4" shape-rendering="crispEdges"><rect width="57" height="4" fill="#000"/><rect x="1" y="1" width="55" height="3" fill="#fff"/></svg><svg style="left:499px;top:310.3px" width="17" height="17" viewBox="0 0 17 17"><circle cx="6" cy="5" r="3.6" fill="#b9774f"/><path d="M0 13c0-3 2.4-5 5.8-5V13Z" fill="#ee2c58"/><circle cx="10" cy="6.2" r="3.9" fill="#f2cf8e"/><path d="M7.3 3.6c1.6-1.4 4-1.4 5.6 0.4L12.3 5c-1.4-.8-3-.8-4.5 0Z" fill="#e3b25e"/><path d="M3.2 16.6c0-3.6 2.6-5.6 6.8-5.6s6.8 2 6.8 5.6Z" fill="#2e9a48"/></svg><div class="btn" style="left:957px;top:242px;width:132px;height:27px;"></div><svg style="left:966px;top:242px" width="16" height="27"><circle cx="8" cy="13.3" r="7.5" fill="#3fb950"/><path d="M8 9V17.6M3.7 13.3H12.3" stroke="#fff" stroke-width="2.4"/></svg><span class="t" style="top:250.89px;font-size:11.0px;line-height:11.0px;color:#000;letter-spacing:-0.296px;left:989.50px;">Προσθήκη</span><div class="btn" style="left:957px;top:278px;width:132px;height:27px;"></div><svg style="left:965px;top:278px" width="18" height="27" viewBox="0 -5 17 27"><circle cx="6" cy="5" r="3.6" fill="#b9774f"/><path d="M0 13c0-3 2.4-5 5.8-5V13Z" fill="#ee2c58"/><circle cx="10" cy="6.2" r="3.9" fill="#f2cf8e"/><path d="M7.3 3.6c1.6-1.4 4-1.4 5.6 0.4L12.3 5c-1.4-.8-3-.8-4.5 0Z" fill="#e3b25e"/><path d="M3.2 16.6c0-3.6 2.6-5.6 6.8-5.6s6.8 2 6.8 5.6Z" fill="#2e9a48"/></svg><span class="t" style="top:286.89px;font-size:11.0px;line-height:11.0px;color:#000;letter-spacing:-0.448px;left:989.50px;">Επεξεργασία</span><div class="btn" style="left:957px;top:313px;width:132px;height:27px;"></div><svg style="left:966px;top:313px" width="16" height="27"><circle cx="8" cy="13.3" r="7.7" fill="#f03a3a"/><rect x="3" y="11.8" width="10" height="3.2" rx="1" fill="#fff"/></svg><span class="t" style="top:321.89px;font-size:11.0px;line-height:11.0px;color:#000;letter-spacing:-0.090px;left:989.50px;">Διαγραφή</span><div class="btn" style="left:957px;top:380px;width:132px;height:27px;"></div><svg style="left:966px;top:380px" width="16" height="27"><rect x="3" y="8" width="12" height="12.5" fill="#0090ff"/><rect x="1" y="5.5" width="11.5" height="12" fill="#ff0080"/></svg><span class="t" style="top:388.89px;font-size:11.0px;line-height:11.0px;color:#000;letter-spacing:-0.104px;left:989.50px;">Διδασκαλίες</span><div class="btn" style="left:957px;top:416px;width:132px;height:27px;"></div><svg style="left:965px;top:416px" width="18" height="27"><circle cx="8.5" cy="13" r="7" fill="#fff" stroke="#4a7bd0" stroke-width="1.2"/><path d="M9.3 8.2L8 13.4L9.8 16.2" stroke="#8a8a98" stroke-width="1.1" fill="none"/></svg><span class="t" style="top:424.89px;font-size:11.0px;line-height:11.0px;color:#000;letter-spacing:-0.366px;left:989.50px;">Περιορισμοί</span><div class="btn" style="left:957px;top:452px;width:132px;height:27px;"></div><svg style="left:965px;top:452px" width="18" height="27"><path d="M6 5.5V21M12.2 5.5V21M1.2 10.2H17M1.2 16.4H17" stroke="#8a72aa" stroke-width="2.9"/></svg><span class="t" style="top:460.89px;font-size:11.0px;line-height:11.0px;color:#000;letter-spacing:0.019px;left:989.50px;">Συνθήκες</span><div class="btn" style="left:957px;top:518px;width:132px;height:27px;"></div><svg style="left:965px;top:518px" width="18" height="27"><path d="M2 6l4.6 0-1.3 1.4L9 11.2l3.7-3.8L11.4 6H16v4.6l-1.3-1.3-4 4.2V21H7.3V13.5l-4-4.2L2 10.6Z" fill="#7fb2ee" stroke="#4a7fd0" stroke-width="1"/></svg><span class="t" style="top:526.89px;font-size:11.0px;line-height:11.0px;color:#000;letter-spacing:-0.351px;left:989.50px;">Κατηγορίες</span><svg style="left:953px;top:615px" width="10" height="12"><path d="M5 11V1.5M1.2 5.2L5 1.4L8.8 5.2" stroke="#000" stroke-width="1.7" fill="none"/></svg><svg style="left:953px;top:641px" width="10" height="12"><path d="M5 1V10.5M1.2 6.8L5 10.6L8.8 6.8" stroke="#000" stroke-width="1.7" fill="none"/></svg><div class="a " style="left:493px;top:682px;width:606px;height:1px;background:#a0a0a0;"></div><div class="btn" style="left:1026px;top:697px;width:73px;height:21px;"></div><span class="t" style="top:702.89px;font-size:11.0px;line-height:11.0px;color:#000;letter-spacing:-0.211px;left:812.50px;width:500px;text-align:center;text-indent:-0.211px;">Κλείσιμο</span><svg style="left:1099px;top:717px" width="10" height="10"><g fill="#b4b4b4"><rect x="6" y="0" width="2" height="2"/><rect x="3" y="3" width="2" height="2"/><rect x="6" y="3" width="2" height="2"/><rect x="0" y="6" width="2" height="2"/><rect x="3" y="6" width="2" height="2"/><rect x="6" y="6" width="2" height="2"/></g></svg><div class="a" style="left:41px;top:312px;width:896px;height:555px;background:#f9f9f9;border:1px solid #d4d4d4;"></div><div class="a" style="left:47px;top:343px;width:884px;height:516px;background:#f0f0f0;border:1px solid #d2d2d2;"></div><span class="t" style="top:321.08px;font-size:15.5px;line-height:15.5px;color:#303030;letter-spacing:0.499px;left:452.60px;">Κατανομή</span><div class="a " style="left:883px;top:313px;width:47px;height:21px;background:#c75050;"></div><svg style="left:900px;top:318px" width="12" height="11"><path d="M2 1.800L10 9.200M10 1.800L2 9.200" stroke="#fff" stroke-width="2.300"/></svg><svg style="left:863px;top:318px" width="13" height="11"><rect x="0.75" y="0.75" width="11" height="9" fill="none" stroke="#222" stroke-width="1.5"/><rect x="0" y="0" width="12.5" height="3" fill="#222"/></svg><div class="a " style="left:837px;top:326px;width:11px;height:2px;background:#9a9a9a;"></div><svg style="left:50px;top:321px" width="16" height="14"><rect x="0.5" y="0.5" width="15" height="12.5" fill="#f4f6f8" stroke="#b4bac4"/><rect x="2" y="3" width="6" height="8.5" fill="#3f8f78"/><rect x="8" y="3" width="3.5" height="8.5" fill="#8fc6dc"/><rect x="11.5" y="3" width="2.5" height="8.5" fill="#dfe8f0"/></svg><svg style="left:58px;top:347px" width="44" height="44" viewBox="0 0 44 44">
<path d="M9 11c0-6 4-9.5 9-9.5s9 3.500 9 9.500c0 4 1 7 2.500 9.500-3 1.500-6 1.500-8 .5h-7c-2 1-5 1-8-.5 1.500-2.500 2.500-5.500 2.500-9.500z" fill="#b8835c" stroke="#8a5a3c" stroke-width="1"/>
<path d="M12.500 12c0-3.500 2.500-5.500 5.500-5.500s5.500 2 5.500 5.500-2.500 8-5.500 8-5.500-4.500-5.500-8z" fill="#e4b57e"/>
<path d="M1 33c0-6.500 5-10 11-10.500l4 1 4-1c2 .2 3 .5 4 1V33z" fill="#f5a3ab" stroke="#b02030" stroke-width="1.200"/>
<path d="M16.500 18.500c0-8.500 4-13.500 10-13.500s10 5 10 13.500c0 3.500-1 7-2 8.500h-16c-1-1.500-2-5-2-8.500z" fill="#f3ca7c" stroke="#a98445" stroke-width="1"/>
<path d="M19.800 18c0-3 1.500-5.500 3.500-6.500 2 1.500 5.500 2 8.500 1.500 1 1 1.600 3 1.600 5 0 5-3.300 10.500-6.900 10.500s-6.700-5.500-6.700-10.500z" fill="#fcdf9f" stroke="#a98445" stroke-width=".9"/>
<path d="M24 27.500v3.500c1.800 1.600 4.200 1.600 6 0v-3.500" fill="#fcdf9f" stroke="#a98445" stroke-width=".9"/>
<path d="M10.500 43.500c0-8 6-12.500 13.500-13 1.800 1.800 4.200 1.800 6 0 7.500.5 13.500 5 13.500 13z" fill="#b5e0b5" stroke="#1f8a3a" stroke-width="1.200"/>
</svg><span class="t" style="top:354.00px;font-size:15px;line-height:15px;color:#000;font-weight:bold;letter-spacing:-2.288px;left:110.00px;">Α1</span><span class="t" style="top:379.39px;font-size:11.0px;line-height:11.0px;color:#000;letter-spacing:0.431px;left:110.00px;">Α1</span><div class="a" style="left:54px;top:393px;width:870px;height:411px;background:#fff;border:1px solid #828790;"></div><div class="hdr" style="left:55px;top:394px;width:150.5px;height:24px;"></div><span class="t" style="top:401.89px;font-size:11.0px;line-height:11.0px;color:#000;letter-spacing:-0.514px;left:61.60px;">Μάθημα</span><div class="hdr" style="left:205.5px;top:394px;width:160.0px;height:24px;"></div><span class="t" style="top:401.89px;font-size:11.0px;line-height:11.0px;color:#000;letter-spacing:-0.150px;left:211.50px;">Εκπαιδευτικός</span><div class="hdr" style="left:365.5px;top:394px;width:130.0px;height:24px;"></div><span class="t" style="top:401.89px;font-size:11.0px;line-height:11.0px;color:#000;letter-spacing:-0.170px;left:371.30px;">Τμήμα</span><div class="hdr" style="left:495.5px;top:394px;width:50.0px;height:24px;"></div><span class="t" style="top:401.89px;font-size:11.0px;line-height:11.0px;color:#000;letter-spacing:0.158px;left:501.30px;">Πλήθος</span><div class="hdr" style="left:545.5px;top:394px;width:60.0px;height:24px;"></div><span class="t" style="top:401.89px;font-size:11.0px;line-height:11.0px;color:#000;letter-spacing:-0.104px;left:551.50px;">Διάρκεια</span><div class="hdr" style="left:605.5px;top:394px;width:90.0px;height:24px;"></div><span class="t" style="top:401.89px;font-size:11.0px;line-height:11.0px;color:#000;letter-spacing:-0.162px;left:611.50px;">Αίθουσες</span><div class="hdr" style="left:695.5px;top:394px;width:50.0px;height:24px;"></div><span class="t" style="top:401.89px;font-size:11.0px;line-height:11.0px;color:#000;letter-spacing:-0.127px;left:701.50px;">Εβδο…</span><div class="hdr" style="left:745.5px;top:394px;width:50.0px;height:24px;"></div><span class="t" style="top:401.89px;font-size:11.0px;line-height:11.0px;color:#000;letter-spacing:-0.054px;left:751.50px;">Περίο…</span><div class="a " style="left:795.5px;top:394px;width:127.5px;height:24px;background:#fcfcfd;"></div><div class="a " style="left:55px;top:418px;width:868px;height:1px;background:#dce6f4;"></div><div class="a " style="left:55px;top:418px;width:740.5px;height:1px;background:#b0b0b0;"></div><svg style="left:189px;top:399px" width="9" height="14"><path d="M1 13L7 1" stroke="#b4b4b4" stroke-width="1"/><path d="M7 1V13H1" stroke="#fff" stroke-width="1" fill="none"/></svg><div class="a " style="left:60px;top:419px;width:735.5px;height:26px;background:#f5f5f5;"></div><div class="cell" style="left:62px;top:421px;width:22px;height:22px;background:linear-gradient(rgba(255,255,255,0.6) 0px,rgba(255,255,255,0) 9px),linear-gradient(100deg,#ffc0c0 0,#ffc0c0 24%,#ffc000 24%,#ffc000 52%,#ffc81c 52%);"></div><span class="t" style="top:427.39px;font-size:11.0px;line-height:11.0px;color:#000;letter-spacing:-0.450px;left:-177.60px;width:500px;text-align:center;text-indent:-0.450px;">ΑΞΓ</span><span class="t" style="top:427.39px;font-size:11.0px;line-height:11.0px;color:#000;letter-spacing:-0.684px;left:111.60px;word-spacing:1.2px;">Α' ΞΕΝΗ ΓΛΩΣΣΑ</span><span class="t" style="top:427.39px;font-size:11.0px;line-height:11.0px;color:#000;letter-spacing:-0.181px;left:211.50px;">ΜΠΙΝΗΣ,ΗΛΙΟΠΟΥΛΟΥ,Γ…</span><span class="t" style="top:427.39px;font-size:11.0px;line-height:11.0px;color:#000;letter-spacing:-0.125px;left:371.50px;word-spacing:1.2px;">Α1, Α4</span><span class="t" style="top:427.39px;font-size:11.0px;line-height:11.0px;color:#000;left:502.00px;">3</span><span class="t" style="top:427.39px;font-size:11.0px;line-height:11.0px;color:#000;left:553.00px;">1</span><svg style="left:613.5px;top:422.3px" width="12.2" height="13.6" viewBox="0 0 13 14" preserveAspectRatio="none"><rect x="0.2" y="0.3" width="12" height="13.2" fill="#fff" opacity=".7"/><rect x="7.700" y="0.800" width="1.900" height="4" fill="#000"/><rect x="7.700" y="0.800" width="1.100" height="1.800" fill="#f01010"/><rect x="1.900" y="6" width="8.300" height="6.300" fill="#fff" stroke="#000" stroke-width="1"/><path d="M3.800 8.500L5.800 6.200L7.800 8.500" stroke="#fff000" stroke-width="1.200" fill="none" stroke-dasharray="1 .8"/><rect x="4.500" y="8.800" width="2.300" height="3.400" fill="#f0a000" stroke="#a86000" stroke-width=".5"/><path d="M5.800 0.700L0.400 6.100L1.600 7.300L5.800 3.300L10.200 7.500L11.400 6.300Z" fill="#ffe630"/><path d="M0.900 6.700L5.800 2.100" stroke="#b87800" stroke-width="1.100" stroke-dasharray="1 .6"/><path d="M0.700 7.200L1.700 7.800L5.800 3.900L10.300 8L11.600 6.900" stroke="#000" stroke-width="1.100" fill="none"/></svg><div class="cell" style="left:62px;top:447px;width:22px;height:22px;background:linear-gradient(rgba(255,255,255,0.6) 0px,rgba(255,255,255,0) 9px),#800000;"></div><span class="t" style="top:453.39px;font-size:11.0px;line-height:11.0px;color:#000;letter-spacing:-0.450px;left:-177.60px;width:500px;text-align:center;text-indent:-0.450px;word-spacing:1.2px;">Α Κ</span><span class="t" style="top:453.39px;font-size:11.0px;line-height:11.0px;color:#000;letter-spacing:-0.543px;left:111.60px;word-spacing:1.2px;">ΑΡΧΑΙΑ ΕΛΛΗ…</span><span class="t" style="top:453.39px;font-size:11.0px;line-height:11.0px;color:#000;letter-spacing:-0.428px;left:211.50px;">ΜΠΑΛΑΦΙΔΗΣ</span><span class="t" style="top:453.39px;font-size:11.0px;line-height:11.0px;color:#000;letter-spacing:0.431px;left:371.50px;">Α1</span><span class="t" style="top:453.39px;font-size:11.0px;line-height:11.0px;color:#000;left:502.00px;">4</span><span class="t" style="top:453.39px;font-size:11.0px;line-height:11.0px;color:#000;left:553.00px;">1</span><svg style="left:613.5px;top:448.3px" width="12.2" height="13.6" viewBox="0 0 13 14" preserveAspectRatio="none"><rect x="0.2" y="0.3" width="12" height="13.2" fill="#fff" opacity=".7"/><rect x="7.700" y="0.800" width="1.900" height="4" fill="#000"/><rect x="7.700" y="0.800" width="1.100" height="1.800" fill="#f01010"/><rect x="1.900" y="6" width="8.300" height="6.300" fill="#fff" stroke="#000" stroke-width="1"/><path d="M3.800 8.500L5.800 6.200L7.800 8.500" stroke="#fff000" stroke-width="1.200" fill="none" stroke-dasharray="1 .8"/><rect x="4.500" y="8.800" width="2.300" height="3.400" fill="#f0a000" stroke="#a86000" stroke-width=".5"/><path d="M5.800 0.700L0.400 6.100L1.600 7.300L5.800 3.300L10.200 7.500L11.400 6.300Z" fill="#ffe630"/><path d="M0.900 6.700L5.800 2.100" stroke="#b87800" stroke-width="1.100" stroke-dasharray="1 .6"/><path d="M0.700 7.200L1.700 7.800L5.800 3.900L10.300 8L11.600 6.900" stroke="#000" stroke-width="1.100" fill="none"/></svg><div class="a " style="left:60px;top:471px;width:735.5px;height:26px;background:#f5f5f5;"></div><div class="cell" style="left:62px;top:473px;width:22px;height:22px;background:linear-gradient(rgba(255,255,255,0.6) 0px,rgba(255,255,255,0) 9px),#00c0ff;"></div><span class="t" style="top:479.39px;font-size:11.0px;line-height:11.0px;color:#000;letter-spacing:-0.450px;left:-177.60px;width:500px;text-align:center;text-indent:-0.450px;">ΑΡΟ</span><span class="t" style="top:479.39px;font-size:11.0px;line-height:11.0px;color:#000;letter-spacing:-0.738px;left:111.60px;word-spacing:1.2px;">ΑΡΧΕΣ ΟΙΚΟΝ…</span><span class="t" style="top:479.39px;font-size:11.0px;line-height:11.0px;color:#000;letter-spacing:-0.631px;left:211.50px;">ΜΠΟΥΤΣΙΚΟΣ</span><span class="t" style="top:479.39px;font-size:11.0px;line-height:11.0px;color:#000;letter-spacing:0.431px;left:371.50px;">Α1</span><span class="t" style="top:479.39px;font-size:11.0px;line-height:11.0px;color:#000;left:502.00px;">2</span><span class="t" style="top:479.39px;font-size:11.0px;line-height:11.0px;color:#000;left:553.00px;">1</span><svg style="left:613.5px;top:474.3px" width="12.2" height="13.6" viewBox="0 0 13 14" preserveAspectRatio="none"><rect x="0.2" y="0.3" width="12" height="13.2" fill="#fff" opacity=".7"/><rect x="7.700" y="0.800" width="1.900" height="4" fill="#000"/><rect x="7.700" y="0.800" width="1.100" height="1.800" fill="#f01010"/><rect x="1.900" y="6" width="8.300" height="6.300" fill="#fff" stroke="#000" stroke-width="1"/><path d="M3.800 8.500L5.800 6.200L7.800 8.500" stroke="#fff000" stroke-width="1.200" fill="none" stroke-dasharray="1 .8"/><rect x="4.500" y="8.800" width="2.300" height="3.400" fill="#f0a000" stroke="#a86000" stroke-width=".5"/><path d="M5.800 0.700L0.400 6.100L1.600 7.300L5.800 3.300L10.200 7.500L11.400 6.300Z" fill="#ffe630"/><path d="M0.900 6.700L5.800 2.100" stroke="#b87800" stroke-width="1.100" stroke-dasharray="1 .6"/><path d="M0.700 7.200L1.700 7.800L5.800 3.900L10.300 8L11.600 6.900" stroke="#000" stroke-width="1.100" fill="none"/></svg><div class="cell" style="left:62px;top:499px;width:22px;height:22px;background:linear-gradient(rgba(255,255,255,0.6) 0px,rgba(255,255,255,0) 9px),#80c0ff;"></div><span class="t" style="top:505.39px;font-size:11.0px;line-height:11.0px;color:#000;letter-spacing:-0.450px;left:-177.60px;width:500px;text-align:center;text-indent:-0.450px;">ΕΠ</span><span class="t" style="top:505.39px;font-size:11.0px;line-height:11.0px;color:#000;letter-spacing:-0.694px;left:111.60px;word-spacing:1.2px;">ΕΦ. ΠΛΗΡΟΦ…</span><span class="t" style="top:505.39px;font-size:11.0px;line-height:11.0px;color:#000;letter-spacing:-0.298px;left:211.50px;">ΒΑΪΟΣ</span><span class="t" style="top:505.39px;font-size:11.0px;line-height:11.0px;color:#000;letter-spacing:0.431px;left:371.50px;">Α1</span><span class="t" style="top:505.39px;font-size:11.0px;line-height:11.0px;color:#000;left:502.00px;">2</span><span class="t" style="top:505.39px;font-size:11.0px;line-height:11.0px;color:#000;left:553.00px;">1</span><svg style="left:613.5px;top:500.3px" width="12.2" height="13.6" viewBox="0 0 13 14" preserveAspectRatio="none"><rect x="0.2" y="0.3" width="12" height="13.2" fill="#fff" opacity=".7"/><rect x="7.700" y="0.800" width="1.900" height="4" fill="#000"/><rect x="7.700" y="0.800" width="1.100" height="1.800" fill="#f01010"/><rect x="1.900" y="6" width="8.300" height="6.300" fill="#fff" stroke="#000" stroke-width="1"/><path d="M3.800 8.500L5.800 6.200L7.800 8.500" stroke="#fff000" stroke-width="1.200" fill="none" stroke-dasharray="1 .8"/><rect x="4.500" y="8.800" width="2.300" height="3.400" fill="#f0a000" stroke="#a86000" stroke-width=".5"/><path d="M5.800 0.700L0.400 6.100L1.600 7.300L5.800 3.300L10.200 7.500L11.400 6.300Z" fill="#ffe630"/><path d="M0.900 6.700L5.800 2.100" stroke="#b87800" stroke-width="1.100" stroke-dasharray="1 .6"/><path d="M0.700 7.200L1.700 7.800L5.800 3.900L10.300 8L11.600 6.900" stroke="#000" stroke-width="1.100" fill="none"/></svg><div class="a " style="left:60px;top:523px;width:735.5px;height:26px;background:#f5f5f5;"></div><div class="cell" style="left:62px;top:525px;width:22px;height:22px;background:linear-gradient(rgba(255,255,255,0.6) 0px,rgba(255,255,255,0) 9px),#008000;"></div><span class="t" style="top:531.39px;font-size:11.0px;line-height:11.0px;color:#000;letter-spacing:-0.450px;left:-177.60px;width:500px;text-align:center;text-indent:-0.450px;">ΘΡΗ</span><span class="t" style="top:531.39px;font-size:11.0px;line-height:11.0px;color:#000;letter-spacing:-0.871px;left:111.60px;">ΘΡΗΣΚΕΥΤΙΚΑ</span><span class="t" style="top:531.39px;font-size:11.0px;line-height:11.0px;color:#000;letter-spacing:-0.769px;left:211.50px;">ΜΑΣΩΝΟΥ</span><span class="t" style="top:531.39px;font-size:11.0px;line-height:11.0px;color:#000;letter-spacing:0.431px;left:371.50px;">Α1</span><span class="t" style="top:531.39px;font-size:11.0px;line-height:11.0px;color:#000;left:502.00px;">2</span><span class="t" style="top:531.39px;font-size:11.0px;line-height:11.0px;color:#000;left:553.00px;">1</span><svg style="left:613.5px;top:526.3px" width="12.2" height="13.6" viewBox="0 0 13 14" preserveAspectRatio="none"><rect x="0.2" y="0.3" width="12" height="13.2" fill="#fff" opacity=".7"/><rect x="7.700" y="0.800" width="1.900" height="4" fill="#000"/><rect x="7.700" y="0.800" width="1.100" height="1.800" fill="#f01010"/><rect x="1.900" y="6" width="8.300" height="6.300" fill="#fff" stroke="#000" stroke-width="1"/><path d="M3.800 8.500L5.800 6.200L7.800 8.500" stroke="#fff000" stroke-width="1.200" fill="none" stroke-dasharray="1 .8"/><rect x="4.500" y="8.800" width="2.300" height="3.400" fill="#f0a000" stroke="#a86000" stroke-width=".5"/><path d="M5.800 0.700L0.400 6.100L1.600 7.300L5.800 3.300L10.200 7.500L11.400 6.300Z" fill="#ffe630"/><path d="M0.900 6.700L5.800 2.100" stroke="#b87800" stroke-width="1.100" stroke-dasharray="1 .6"/><path d="M0.700 7.200L1.700 7.800L5.800 3.900L10.300 8L11.600 6.900" stroke="#000" stroke-width="1.100" fill="none"/></svg><div class="cell" style="left:62px;top:551px;width:22px;height:22px;background:linear-gradient(rgba(255,255,255,0.6) 0px,rgba(255,255,255,0) 9px),#c0ffff;"></div><span class="t" style="top:557.39px;font-size:11.0px;line-height:11.0px;color:#000;letter-spacing:-0.450px;left:-177.60px;width:500px;text-align:center;text-indent:-0.450px;">ΙΣΤ</span><span class="t" style="top:557.39px;font-size:11.0px;line-height:11.0px;color:#000;letter-spacing:-0.295px;left:111.60px;">ΙΣΤΟΡΙΑ</span><span class="t" style="top:557.39px;font-size:11.0px;line-height:11.0px;color:#000;letter-spacing:-0.540px;left:211.50px;">ΚΑΠΕΤΑΝΙΔΗΣ</span><span class="t" style="top:557.39px;font-size:11.0px;line-height:11.0px;color:#000;letter-spacing:0.431px;left:371.50px;">Α1</span><span class="t" style="top:557.39px;font-size:11.0px;line-height:11.0px;color:#000;left:502.00px;">2</span><span class="t" style="top:557.39px;font-size:11.0px;line-height:11.0px;color:#000;left:553.00px;">1</span><svg style="left:613.5px;top:552.3px" width="12.2" height="13.6" viewBox="0 0 13 14" preserveAspectRatio="none"><rect x="0.2" y="0.3" width="12" height="13.2" fill="#fff" opacity=".7"/><rect x="7.700" y="0.800" width="1.900" height="4" fill="#000"/><rect x="7.700" y="0.800" width="1.100" height="1.800" fill="#f01010"/><rect x="1.900" y="6" width="8.300" height="6.300" fill="#fff" stroke="#000" stroke-width="1"/><path d="M3.800 8.500L5.800 6.200L7.800 8.500" stroke="#fff000" stroke-width="1.200" fill="none" stroke-dasharray="1 .8"/><rect x="4.500" y="8.800" width="2.300" height="3.400" fill="#f0a000" stroke="#a86000" stroke-width=".5"/><path d="M5.800 0.700L0.400 6.100L1.600 7.300L5.800 3.300L10.200 7.500L11.400 6.300Z" fill="#ffe630"/><path d="M0.900 6.700L5.800 2.100" stroke="#b87800" stroke-width="1.100" stroke-dasharray="1 .6"/><path d="M0.700 7.200L1.700 7.800L5.800 3.900L10.300 8L11.600 6.900" stroke="#000" stroke-width="1.100" fill="none"/></svg><div class="a " style="left:60px;top:575px;width:735.5px;height:26px;background:#f5f5f5;"></div><div class="cell" style="left:62px;top:577px;width:22px;height:22px;background:linear-gradient(rgba(255,255,255,0.6) 0px,rgba(255,255,255,0) 9px),#800080;"></div><span class="t" style="top:583.39px;font-size:11.0px;line-height:11.0px;color:#000;letter-spacing:-0.450px;left:-177.60px;width:500px;text-align:center;text-indent:-0.450px;">ΜΑ</span><span class="t" style="top:583.39px;font-size:11.0px;line-height:11.0px;color:#000;letter-spacing:-0.501px;left:111.60px;">ΜΑΘΗΜΑΤΙΚΑ</span><span class="t" style="top:583.39px;font-size:11.0px;line-height:11.0px;color:#000;letter-spacing:-0.439px;left:211.50px;">ΡΙΖΟΥ</span><span class="t" style="top:583.39px;font-size:11.0px;line-height:11.0px;color:#000;letter-spacing:0.431px;left:371.50px;">Α1</span><span class="t" style="top:583.39px;font-size:11.0px;line-height:11.0px;color:#000;left:502.00px;">5</span><span class="t" style="top:583.39px;font-size:11.0px;line-height:11.0px;color:#000;left:553.00px;">1</span><svg style="left:613.5px;top:578.3px" width="12.2" height="13.6" viewBox="0 0 13 14" preserveAspectRatio="none"><rect x="0.2" y="0.3" width="12" height="13.2" fill="#fff" opacity=".7"/><rect x="7.700" y="0.800" width="1.900" height="4" fill="#000"/><rect x="7.700" y="0.800" width="1.100" height="1.800" fill="#f01010"/><rect x="1.900" y="6" width="8.300" height="6.300" fill="#fff" stroke="#000" stroke-width="1"/><path d="M3.800 8.500L5.800 6.200L7.800 8.500" stroke="#fff000" stroke-width="1.200" fill="none" stroke-dasharray="1 .8"/><rect x="4.500" y="8.800" width="2.300" height="3.400" fill="#f0a000" stroke="#a86000" stroke-width=".5"/><path d="M5.800 0.700L0.400 6.100L1.600 7.300L5.800 3.300L10.200 7.500L11.400 6.300Z" fill="#ffe630"/><path d="M0.900 6.700L5.800 2.100" stroke="#b87800" stroke-width="1.100" stroke-dasharray="1 .6"/><path d="M0.700 7.200L1.700 7.800L5.800 3.900L10.300 8L11.600 6.900" stroke="#000" stroke-width="1.100" fill="none"/></svg><div class="cell" style="left:62px;top:603px;width:22px;height:22px;background:linear-gradient(rgba(255,255,255,0.6) 0px,rgba(255,255,255,0) 9px),#800000;"></div><span class="t" style="top:609.39px;font-size:11.0px;line-height:11.0px;color:#000;letter-spacing:-0.450px;left:-177.60px;width:500px;text-align:center;text-indent:-0.450px;">ΝΕ</span><span class="t" style="top:609.39px;font-size:11.0px;line-height:11.0px;color:#000;letter-spacing:-0.638px;left:111.60px;word-spacing:1.2px;">ΝΕΑ ΕΛΛΗΝΙΚΑ</span><span class="t" style="top:609.39px;font-size:11.0px;line-height:11.0px;color:#000;letter-spacing:-0.428px;left:211.50px;">ΜΠΑΛΑΦΙΔΗΣ</span><span class="t" style="top:609.39px;font-size:11.0px;line-height:11.0px;color:#000;letter-spacing:0.431px;left:371.50px;">Α1</span><span class="t" style="top:609.39px;font-size:11.0px;line-height:11.0px;color:#000;left:502.00px;">4</span><span class="t" style="top:609.39px;font-size:11.0px;line-height:11.0px;color:#000;left:553.00px;">1</span><svg style="left:613.5px;top:604.3px" width="12.2" height="13.6" viewBox="0 0 13 14" preserveAspectRatio="none"><rect x="0.2" y="0.3" width="12" height="13.2" fill="#fff" opacity=".7"/><rect x="7.700" y="0.800" width="1.900" height="4" fill="#000"/><rect x="7.700" y="0.800" width="1.100" height="1.800" fill="#f01010"/><rect x="1.900" y="6" width="8.300" height="6.300" fill="#fff" stroke="#000" stroke-width="1"/><path d="M3.800 8.500L5.800 6.200L7.800 8.500" stroke="#fff000" stroke-width="1.200" fill="none" stroke-dasharray="1 .8"/><rect x="4.500" y="8.800" width="2.300" height="3.400" fill="#f0a000" stroke="#a86000" stroke-width=".5"/><path d="M5.800 0.700L0.400 6.100L1.600 7.300L5.800 3.300L10.200 7.500L11.400 6.300Z" fill="#ffe630"/><path d="M0.900 6.700L5.800 2.100" stroke="#b87800" stroke-width="1.100" stroke-dasharray="1 .6"/><path d="M0.700 7.200L1.700 7.800L5.800 3.900L10.300 8L11.600 6.900" stroke="#000" stroke-width="1.100" fill="none"/></svg><div class="a " style="left:60px;top:627px;width:735.5px;height:26px;background:#f5f5f5;"></div><div class="cell" style="left:62px;top:629px;width:22px;height:22px;background:linear-gradient(rgba(255,255,255,0.6) 0px,rgba(255,255,255,0) 9px),#8000ff;"></div><span class="t" style="top:635.39px;font-size:11.0px;line-height:11.0px;color:#000;letter-spacing:-0.450px;left:-177.60px;width:500px;text-align:center;text-indent:-0.450px;">ΤΕΧ</span><span class="t" style="top:635.39px;font-size:11.0px;line-height:11.0px;color:#000;letter-spacing:-0.436px;left:111.60px;">ΤΕΧΝΟΛΟΓΙΑ</span><span class="t" style="top:635.39px;font-size:11.0px;line-height:11.0px;color:#000;letter-spacing:-0.833px;left:211.50px;">ΤΣΟΚΑΣ</span><span class="t" style="top:635.39px;font-size:11.0px;line-height:11.0px;color:#000;letter-spacing:0.431px;left:371.50px;">Α1</span><span class="t" style="top:635.39px;font-size:11.0px;line-height:11.0px;color:#000;left:502.00px;">2</span><span class="t" style="top:635.39px;font-size:11.0px;line-height:11.0px;color:#000;left:553.00px;">1</span><svg style="left:613.5px;top:630.3px" width="12.2" height="13.6" viewBox="0 0 13 14" preserveAspectRatio="none"><rect x="0.2" y="0.3" width="12" height="13.2" fill="#fff" opacity=".7"/><rect x="7.700" y="0.800" width="1.900" height="4" fill="#000"/><rect x="7.700" y="0.800" width="1.100" height="1.800" fill="#f01010"/><rect x="1.900" y="6" width="8.300" height="6.300" fill="#fff" stroke="#000" stroke-width="1"/><path d="M3.800 8.500L5.800 6.200L7.800 8.500" stroke="#fff000" stroke-width="1.200" fill="none" stroke-dasharray="1 .8"/><rect x="4.500" y="8.800" width="2.300" height="3.400" fill="#f0a000" stroke="#a86000" stroke-width=".5"/><path d="M5.800 0.700L0.400 6.100L1.600 7.300L5.800 3.300L10.200 7.500L11.400 6.300Z" fill="#ffe630"/><path d="M0.900 6.700L5.800 2.100" stroke="#b87800" stroke-width="1.100" stroke-dasharray="1 .6"/><path d="M0.700 7.200L1.700 7.800L5.800 3.900L10.300 8L11.600 6.900" stroke="#000" stroke-width="1.100" fill="none"/></svg><div class="cell" style="left:62px;top:655px;width:22px;height:22px;background:linear-gradient(rgba(255,255,255,0.6) 0px,rgba(255,255,255,0) 9px),#c0c000;"></div><span class="t" style="top:661.39px;font-size:11.0px;line-height:11.0px;color:#000;letter-spacing:-0.450px;left:-177.60px;width:500px;text-align:center;text-indent:-0.450px;">ΦΑ</span><span class="t" style="top:661.39px;font-size:11.0px;line-height:11.0px;color:#000;letter-spacing:-0.555px;left:111.60px;word-spacing:1.2px;">ΦΥΣ ΑΓΩΓΗ</span><span class="t" style="top:661.39px;font-size:11.0px;line-height:11.0px;color:#000;letter-spacing:-0.429px;left:211.50px;">ΜΠΙΣΤΟΛΑΣ</span><span class="t" style="top:661.39px;font-size:11.0px;line-height:11.0px;color:#000;letter-spacing:0.431px;left:371.50px;">Α1</span><span class="t" style="top:661.39px;font-size:11.0px;line-height:11.0px;color:#000;left:502.00px;">2</span><span class="t" style="top:661.39px;font-size:11.0px;line-height:11.0px;color:#000;left:553.00px;">1</span><svg style="left:613.5px;top:656.3px" width="12.2" height="13.6" viewBox="0 0 13 14" preserveAspectRatio="none"><rect x="0.2" y="0.3" width="12" height="13.2" fill="#fff" opacity=".7"/><rect x="7.700" y="0.800" width="1.900" height="4" fill="#000"/><rect x="7.700" y="0.800" width="1.100" height="1.800" fill="#f01010"/><rect x="1.900" y="6" width="8.300" height="6.300" fill="#fff" stroke="#000" stroke-width="1"/><path d="M3.800 8.500L5.800 6.200L7.800 8.500" stroke="#fff000" stroke-width="1.200" fill="none" stroke-dasharray="1 .8"/><rect x="4.500" y="8.800" width="2.300" height="3.400" fill="#f0a000" stroke="#a86000" stroke-width=".5"/><path d="M5.800 0.700L0.400 6.100L1.600 7.300L5.800 3.300L10.200 7.500L11.400 6.300Z" fill="#ffe630"/><path d="M0.900 6.700L5.800 2.100" stroke="#b87800" stroke-width="1.100" stroke-dasharray="1 .6"/><path d="M0.700 7.200L1.700 7.800L5.800 3.900L10.300 8L11.600 6.900" stroke="#000" stroke-width="1.100" fill="none"/></svg><div class="a " style="left:60px;top:679px;width:735.5px;height:26px;background:#f5f5f5;"></div><div class="cell" style="left:62px;top:681px;width:22px;height:22px;background:linear-gradient(rgba(255,255,255,0.6) 0px,rgba(255,255,255,0) 9px),#8000ff;"></div><span class="t" style="top:687.39px;font-size:11.0px;line-height:11.0px;color:#000;letter-spacing:-0.450px;left:-177.60px;width:500px;text-align:center;text-indent:-0.450px;">ΦΥΣ</span><span class="t" style="top:687.39px;font-size:11.0px;line-height:11.0px;color:#000;letter-spacing:-0.701px;left:111.60px;">ΦΥΣΙΚΗ</span><span class="t" style="top:687.39px;font-size:11.0px;line-height:11.0px;color:#000;letter-spacing:-0.833px;left:211.50px;">ΤΣΟΚΑΣ</span><span class="t" style="top:687.39px;font-size:11.0px;line-height:11.0px;color:#000;letter-spacing:0.431px;left:371.50px;">Α1</span><span class="t" style="top:687.39px;font-size:11.0px;line-height:11.0px;color:#000;left:502.00px;">2</span><span class="t" style="top:687.39px;font-size:11.0px;line-height:11.0px;color:#000;left:553.00px;">1</span><svg style="left:613.5px;top:682.3px" width="12.2" height="13.6" viewBox="0 0 13 14" preserveAspectRatio="none"><rect x="0.2" y="0.3" width="12" height="13.2" fill="#fff" opacity=".7"/><rect x="7.700" y="0.800" width="1.900" height="4" fill="#000"/><rect x="7.700" y="0.800" width="1.100" height="1.800" fill="#f01010"/><rect x="1.900" y="6" width="8.300" height="6.300" fill="#fff" stroke="#000" stroke-width="1"/><path d="M3.800 8.500L5.800 6.200L7.800 8.500" stroke="#fff000" stroke-width="1.200" fill="none" stroke-dasharray="1 .8"/><rect x="4.500" y="8.800" width="2.300" height="3.400" fill="#f0a000" stroke="#a86000" stroke-width=".5"/><path d="M5.800 0.700L0.400 6.100L1.600 7.300L5.800 3.300L10.200 7.500L11.400 6.300Z" fill="#ffe630"/><path d="M0.900 6.700L5.800 2.100" stroke="#b87800" stroke-width="1.100" stroke-dasharray="1 .6"/><path d="M0.700 7.200L1.700 7.800L5.800 3.900L10.300 8L11.600 6.900" stroke="#000" stroke-width="1.100" fill="none"/></svg><div class="cell" style="left:62px;top:707px;width:22px;height:22px;background:linear-gradient(rgba(255,255,255,0.6) 0px,rgba(255,255,255,0) 9px),#8000ff;"></div><span class="t" style="top:713.39px;font-size:11.0px;line-height:11.0px;color:#000;letter-spacing:-0.450px;left:-177.60px;width:500px;text-align:center;text-indent:-0.450px;">ΧΗΜ</span><span class="t" style="top:713.39px;font-size:11.0px;line-height:11.0px;color:#000;letter-spacing:-0.858px;left:111.60px;">ΧΗΜΕΙΑ</span><span class="t" style="top:713.39px;font-size:11.0px;line-height:11.0px;color:#000;letter-spacing:-0.833px;left:211.50px;">ΤΣΟΚΑΣ</span><span class="t" style="top:713.39px;font-size:11.0px;line-height:11.0px;color:#000;letter-spacing:0.431px;left:371.50px;">Α1</span><span class="t" style="top:713.39px;font-size:11.0px;line-height:11.0px;color:#000;left:502.00px;">1</span><span class="t" style="top:713.39px;font-size:11.0px;line-height:11.0px;color:#000;left:553.00px;">1</span><svg style="left:613.5px;top:708.3px" width="12.2" height="13.6" viewBox="0 0 13 14" preserveAspectRatio="none"><rect x="0.2" y="0.3" width="12" height="13.2" fill="#fff" opacity=".7"/><rect x="7.700" y="0.800" width="1.900" height="4" fill="#000"/><rect x="7.700" y="0.800" width="1.100" height="1.800" fill="#f01010"/><rect x="1.900" y="6" width="8.300" height="6.300" fill="#fff" stroke="#000" stroke-width="1"/><path d="M3.800 8.500L5.800 6.200L7.800 8.500" stroke="#fff000" stroke-width="1.200" fill="none" stroke-dasharray="1 .8"/><rect x="4.500" y="8.800" width="2.300" height="3.400" fill="#f0a000" stroke="#a86000" stroke-width=".5"/><path d="M5.800 0.700L0.400 6.100L1.600 7.300L5.800 3.300L10.200 7.500L11.400 6.300Z" fill="#ffe630"/><path d="M0.900 6.700L5.800 2.100" stroke="#b87800" stroke-width="1.100" stroke-dasharray="1 .6"/><path d="M0.700 7.200L1.700 7.800L5.800 3.900L10.300 8L11.600 6.900" stroke="#000" stroke-width="1.100" fill="none"/></svg><div class="btn" style="left:55px;top:820px;width:90px;height:26px;border-color:#3c7fd0;"></div><div class="a" style="left:57px;top:822px;width:86px;height:22px;border:1px dotted #000;"></div><span class="t" style="top:828.39px;font-size:11.0px;line-height:11.0px;color:#000;letter-spacing:-0.226px;left:-150.00px;width:500px;text-align:center;text-indent:-0.226px;word-spacing:1.2px;">Νέα διδασκαλία</span><div class="btn" style="left:156px;top:820px;width:94px;height:26px;"></div><span class="t" style="top:828.39px;font-size:11.0px;line-height:11.0px;color:#000;letter-spacing:-0.448px;left:-47.00px;width:500px;text-align:center;text-indent:-0.448px;">Επεξεργασία</span><div class="btn" style="left:259px;top:820px;width:91px;height:26px;"></div><span class="t" style="top:828.39px;font-size:11.0px;line-height:11.0px;color:#000;letter-spacing:-0.090px;left:54.50px;width:500px;text-align:center;text-indent:-0.090px;">Διαγραφή</span><div class="btn" style="left:451px;top:820px;width:91px;height:26px;"></div><span class="t" style="top:828.39px;font-size:11.0px;line-height:11.0px;color:#000;letter-spacing:-0.032px;left:246.50px;width:500px;text-align:center;text-indent:-0.032px;word-spacing:1.2px;">Αντιγραφή σε</span><div class="btn" style="left:553px;top:820px;width:91px;height:26px;"></div><span class="t" style="top:828.39px;font-size:11.0px;line-height:11.0px;color:#000;letter-spacing:-0.296px;left:348.50px;width:500px;text-align:center;text-indent:-0.296px;">Προσθήκη</span><div class="btn" style="left:823px;top:820px;width:100px;height:26px;"></div><span class="t" style="top:828.39px;font-size:11.0px;line-height:11.0px;color:#000;letter-spacing:-0.211px;left:623.00px;width:500px;text-align:center;text-indent:-0.211px;">Κλείσιμο</span><svg style="left:916px;top:850px" width="10" height="10"><g fill="#b4b4b4"><rect x="6" y="0" width="2" height="2"/><rect x="3" y="3" width="2" height="2"/><rect x="6" y="3" width="2" height="2"/><rect x="0" y="6" width="2" height="2"/><rect x="3" y="6" width="2" height="2"/><rect x="6" y="6" width="2" height="2"/></g></svg><svg style="left:0;top:0" width="1185" height="878"><rect x="623.5" y="56.5" width="60" height="95" fill="none" stroke="#e64a46" stroke-width="3"/></svg><svg style="left:0;top:0" width="1185" height="878"><rect x="497.0" y="265.5" width="443.5" height="23.600000000000023" fill="none" stroke="#e64a46" stroke-width="3"/></svg><svg style="left:0;top:0" width="1185" height="878"><rect x="954.5" y="378.0" width="137" height="31.0" fill="none" stroke="#e64a46" stroke-width="3"/></svg><svg style="left:0;top:0" width="1185" height="878"><rect x="52.800000000000004" y="817.9000000000001" width="872.1" height="30.19999999999991" fill="none" stroke="#e64a46" stroke-width="3.4"/></svg><svg style="left:0;top:0" width="1185" height="878"><defs><filter id="sh" x="-20%" y="-20%" width="140%" height="140%"><feDropShadow dx="1.2" dy="1.8" stdDeviation="1.3" flood-color="#000" flood-opacity="0.4"/></filter></defs>
<g filter="url(#sh)" fill="none" stroke="#e64a46" stroke-width="3" stroke-linecap="round">
<path d="M704.5 155.500C709 176 722 183 742 186.500C772 191.500 790 198 797.500 218C800 226 801 234 801.500 242"/>
<path d="M948.500 398C925 406 905 418 890 442C878 460 868 468 851 472C840 474.500 830 474.700 820 474.600"/>
</g>
<g filter="url(#sh)" fill="#e64a46"><path d="M796.300 240.500L806.500 239.800L801.700 250Z"/><path d="M822 469.800L822.300 479.400L812.500 474.600Z"/></g>
</svg><svg style="left:17px;top:11.7px" width="27" height="30" viewBox="0 0 27 30">
<defs><linearGradient id="bb" x1="0" x2="1" y1="0" y2="0"><stop offset="0" stop-color="#f0b000"/><stop offset=".18" stop-color="#fff6c0"/><stop offset=".38" stop-color="#fff000"/><stop offset=".7" stop-color="#ffc400"/><stop offset="1" stop-color="#e89000"/></linearGradient>
<linearGradient id="bk" x1="0" x2="1" y1="0" y2="1"><stop offset="0" stop-color="#ffc820"/><stop offset="1" stop-color="#c87800"/></linearGradient>
<linearGradient id="br" x1="0" x2="1" y1="0" y2="0"><stop offset="0" stop-color="#ffd000"/><stop offset=".2" stop-color="#fff8a0"/><stop offset=".6" stop-color="#ffc000"/><stop offset="1" stop-color="#f0a000"/></linearGradient></defs>
<ellipse cx="13.3" cy="25.5" rx="12.3" ry="4" fill="#000" opacity=".12"/>
<ellipse cx="13" cy="24" rx="12.2" ry="4.8" fill="url(#br)" stroke="#8a4600" stroke-width=".9"/>
<path d="M4 24C4 24 3.500 12 5 8.500C6.500 5 9.500 4 13 4C16.500 4 19.500 5 21 8.500C22.500 12 22 24 22 24C20 26 6 26 4 24Z" fill="url(#bb)"/>
<path d="M1.500 22.500C3 21.500 4 20.500 4 19C4 15 3.500 11.500 5 8.500C6.500 5 9.500 4 13 4C16.500 4 19.500 5 21 8.500C22.500 11.500 22 15 22 19C22 20.500 23 21.500 24.500 22.500" fill="none" stroke="#8a4600" stroke-width=".9"/>
<ellipse cx="14.200" cy="24.300" rx="7.200" ry="3.200" fill="#ff9a08"/>
<ellipse cx="13" cy="4" rx="4.700" ry="3.200" fill="url(#bk)" stroke="#8a4600" stroke-width=".9"/>
<text x="13" y="21.400" font-size="6.500" font-family="Liberation Sans, sans-serif" text-anchor="middle" fill="#8a4a10" font-weight="bold">aSc</text>
</svg><svg style="left:16px;top:63px" width="44" height="48" viewBox="0 0 44 48">
<path d="M1.500 1.500H23L33.500 12V44H1.500Z" fill="#fff" stroke="#98a6b8" stroke-width="1.300"/><path d="M23 1.500V12H33.500" fill="#fff" stroke="#98a6b8" stroke-width="1.300"/>
<circle cx="31.300" cy="36" r="10.300" fill="#a4d2ac" stroke="#7fb98b" stroke-width="1.200"/><path d="M31.300 29.500V42.500M24.800 36H37.800" stroke="#fff" stroke-width="2.800"/></svg><svg style="left:63px;top:66px" width="50" height="41" viewBox="0 0 50 41">
<path d="M1.500 2.500Q1.500 1.500 2.500 1.500H14L17 5H41Q42 5 42 6V38H1.500Z" fill="#deb468" stroke="#b88a4a" stroke-width="1"/>
<path d="M5.500 11.500H19L22 8.500H47.500L42.500 38.500H1.500Z" fill="#f6cf88" stroke="#b88a4a" stroke-width="1"/></svg><svg style="left:131px;top:63px" width="45" height="46" viewBox="0 0 45 46">
<path d="M1 2Q1 1 2 1H35L44 10V43Q44 44 43 44H2Q1 44 1 43Z" fill="#dccbee" stroke="#bba2d8" stroke-width="1.200"/>
<rect x="10.500" y="1.600" width="23" height="13" rx="2" fill="#8f8aa8"/><rect x="14" y="1.600" width="19.500" height="12" rx="1.500" fill="#c9ced9" stroke="#7d7f96" stroke-width="1"/><rect x="26.500" y="4" width="3.200" height="7" fill="#5d6580"/>
<rect x="6.500" y="22.500" width="32" height="21.500" fill="#fff" stroke="#a8a0b8" stroke-width="1"/><path d="M11 28.500H34M11 33.500H34M11 38.500H34" stroke="#cfe6f8" stroke-width="1.300"/></svg><svg style="left:200px;top:62px" width="48" height="48" viewBox="0 0 48 48">
<rect x="9.500" y="1.500" width="28" height="16" fill="#fff" stroke="#b0b8c4" stroke-width="1.200"/>
<rect x="1.500" y="12.500" width="44.500" height="25" rx="4.500" fill="#a5b3ca" stroke="#8d9bb6" stroke-width="1"/>
<path d="M10 12.500H37.500V21Q37.500 24.500 34 24.500H13.500Q10 24.500 10 21Z" fill="#84aeee" stroke="#5f8ad4" stroke-width="1"/>
<rect x="39.500" y="16.500" width="2.200" height="2.200" fill="#ffe27a"/>
<rect x="7" y="29.500" width="33.500" height="3" rx="1.500" fill="#6f7b94"/>
<path d="M10 31H37.500V46H10Z" fill="#fff" stroke="#aab2c0" stroke-width="1.200"/><path d="M15 36H32.500M15 40.500H32.500" stroke="#8a93a6" stroke-width="1.400"/></svg><svg style="left:288px;top:63px" width="44" height="48" viewBox="0 0 44 48">
<path d="M1.500 1.500H23L34.500 13V44H1.500Z" fill="#fff" stroke="#98a6b8" stroke-width="1.300"/><path d="M23 1.500V13H34.500" fill="#fff" stroke="#98a6b8" stroke-width="1.300"/>
<path d="M31 34L40 43" stroke="#8b9bb4" stroke-width="4" stroke-linecap="round"/><circle cx="25.800" cy="28" r="8.300" fill="#cfe7fb" stroke="#8b9bb4" stroke-width="1.600"/></svg><svg style="left:571px;top:63px" width="40" height="46" viewBox="0 0 40 46"><rect x="1" y="1" width="38" height="43.500" rx="1.500" fill="#85b0ef" stroke="#6f97d8"/><rect x="1" y="1" width="5.500" height="43.500" fill="#5b86c9"/><rect x="13" y="10" width="19" height="12.500" fill="#eef3fb"/><rect x="15.500" y="13.500" width="14" height="1.600" fill="#c3cfe6"/><rect x="15.500" y="17" width="14" height="1.600" fill="#c3cfe6"/></svg><svg style="left:628.5px;top:60.5px" width="49.5" height="49.5" viewBox="0 0 44 44">
<path d="M9 11c0-6 4-9.5 9-9.5s9 3.500 9 9.500c0 4 1 7 2.500 9.500-3 1.500-6 1.500-8 .5h-7c-2 1-5 1-8-.5 1.500-2.500 2.500-5.500 2.500-9.500z" fill="#b8835c" stroke="#8a5a3c" stroke-width="1"/>
<path d="M12.500 12c0-3.500 2.500-5.500 5.500-5.500s5.500 2 5.500 5.500-2.500 8-5.500 8-5.500-4.500-5.500-8z" fill="#e4b57e"/>
<path d="M1 33c0-6.500 5-10 11-10.500l4 1 4-1c2 .2 3 .5 4 1V33z" fill="#f5a3ab" stroke="#b02030" stroke-width="1.200"/>
<path d="M16.500 18.500c0-8.500 4-13.500 10-13.500s10 5 10 13.500c0 3.500-1 7-2 8.500h-16c-1-1.500-2-5-2-8.500z" fill="#f3ca7c" stroke="#a98445" stroke-width="1"/>
<path d="M19.800 18c0-3 1.500-5.500 3.500-6.500 2 1.500 5.500 2 8.500 1.500 1 1 1.600 3 1.600 5 0 5-3.300 10.500-6.900 10.500s-6.700-5.500-6.700-10.500z" fill="#fcdf9f" stroke="#a98445" stroke-width=".9"/>
<path d="M24 27.500v3.500c1.800 1.600 4.200 1.600 6 0v-3.500" fill="#fcdf9f" stroke="#a98445" stroke-width=".9"/>
<path d="M10.500 43.500c0-8 6-12.500 13.500-13 1.800 1.800 4.200 1.800 6 0 7.500.5 13.500 5 13.500 13z" fill="#b5e0b5" stroke="#1f8a3a" stroke-width="1.200"/>
</svg><svg style="left:692px;top:60px" width="37" height="49" viewBox="0 0 37 49">
<rect x="14" y="3.500" width="21" height="43.500" fill="#fbc8a8" stroke="#dc9a78" stroke-width="1"/>
<rect x="17" y="6.500" width="15.500" height="40.500" fill="#75646c"/><rect x="17" y="6.500" width="6" height="40.500" fill="#4e424a"/>
<path d="M1.500 5.500L16 1.500V48L1.500 44.500Z" fill="#fcc9a9" stroke="#dc9a78" stroke-width="1"/><circle cx="12.500" cy="26.500" r="1" fill="#c07850"/></svg><svg style="left:757px;top:64px" width="50" height="45" viewBox="0 0 50 45">
<path d="M11.500 20V35.500C11.500 43 38 43 38 35.500V20Z" fill="#3a3d44"/>
<path d="M25 1.500L48.500 17L25 32.500L1.500 17Z" fill="#444850" stroke="#2e3138" stroke-width="1"/>
<path d="M25 17.500L6.500 21.500V33" stroke="#f4a824" stroke-width="1.500" fill="none"/><path d="M6.500 32.500L9.300 38.500L6.500 43L3.700 38.500Z" fill="#f4b030" stroke="#d89018" stroke-width=".8"/></svg><svg style="left:843px;top:60px" width="50" height="52" viewBox="0 0 50 52">
<path d="M1.300 44.500V42C1.300 35.500 7 32.300 14 32L20 35L26 32C33 32.300 38 35.500 38 42V44.500Z" fill="#b5e0b5" stroke="#4e9a5e" stroke-width="1.200"/>
<path d="M14.500 27V33C17.500 36.500 22 36.500 25 33V27" fill="#eebc6c" stroke="#b88844" stroke-width=".9"/>
<path d="M9 16.500c-.8-.3-1.500 1-1 3 .4 1.500 1.200 2.300 2 2.100M30.200 16.500c.8-.3 1.500 1 1 3-.4 1.500-1.200 2.300-2 2.100" fill="#e0aa58" stroke="#b88844" stroke-width=".8"/>
<path d="M10.500 15C10.500 9 14 5.500 19.600 5.500S28.700 9 28.700 15C28.700 23 24.500 30.300 19.600 30.300S10.500 23 10.500 15Z" fill="#f5c878" stroke="#b88844" stroke-width=".9"/>
<path d="M9.600 20C6.500 11 9.500 2.600 18.500 2.600C20.500 2.300 22.500 2.800 23.500 3.800C29 4.500 32.200 11 29.600 20C29.300 16 28.500 13.500 27 11.500C22 14.500 14.500 13.500 12.500 12C11 14 10 16.500 9.600 20Z" fill="#a0643c" stroke="#7c4a2a" stroke-width=".9"/>
<rect x="27.200" y="28.600" width="20.500" height="21" rx="2.200" fill="#82adee" stroke="#4f86dc" stroke-width="1.200"/><path d="M32 40L36.300 44.300L44 35.300" stroke="#fff" stroke-width="2.600" fill="none"/></svg><svg style="left:900px;top:60px" width="49" height="52" viewBox="0 0 49 52"><path d="M5.2 16.8L13.8 25.1" stroke="#3f7fd8" stroke-width="1.300"/><path d="M17.2 14.4L29.2 14.2" stroke="#3f7fd8" stroke-width="1.300"/><path d="M17.2 14.4L13.8 25.1" stroke="#d84a58" stroke-width="1.300"/><path d="M29.2 14.2L37.8 5.9" stroke="#58a868" stroke-width="1.300"/><path d="M29.2 14.2L32.9 25.1" stroke="#3f7fd8" stroke-width="1.300"/><path d="M32.9 25.1L42.8 19.3" stroke="#d84a58" stroke-width="1.300"/><path d="M13.8 25.1L17.2 35.8" stroke="#d84a58" stroke-width="1.300"/><path d="M32.9 25.1L29.4 35.8" stroke="#d84a58" stroke-width="1.300"/><path d="M17.2 35.8L29.4 35.8" stroke="#58a868" stroke-width="1.300"/><path d="M17.2 35.8L11.2 45.3" stroke="#3f7fd8" stroke-width="1.300"/><path d="M29.4 35.8L35.3 45.3" stroke="#58a868" stroke-width="1.300"/><circle cx="37.8" cy="5.9" r="3.600" fill="#b5e0b8" stroke="#58a868" stroke-width="1.100"/><circle cx="29.2" cy="14.2" r="3.600" fill="#82adee" stroke="#3f7fd8" stroke-width="1.100"/><circle cx="17.2" cy="14.4" r="3.600" fill="#f38f98" stroke="#d84a58" stroke-width="1.100"/><circle cx="5.2" cy="16.8" r="3.600" fill="#82adee" stroke="#3f7fd8" stroke-width="1.100"/><circle cx="42.8" cy="19.3" r="3.600" fill="#f38f98" stroke="#d84a58" stroke-width="1.100"/><circle cx="13.8" cy="25.1" r="3.600" fill="#f38f98" stroke="#d84a58" stroke-width="1.100"/><circle cx="32.9" cy="25.1" r="3.600" fill="#f38f98" stroke="#d84a58" stroke-width="1.100"/><circle cx="17.2" cy="35.8" r="3.600" fill="#82adee" stroke="#3f7fd8" stroke-width="1.100"/><circle cx="29.4" cy="35.8" r="3.600" fill="#b5e0b8" stroke="#58a868" stroke-width="1.100"/><circle cx="11.2" cy="45.3" r="3.600" fill="#82adee" stroke="#3f7fd8" stroke-width="1.100"/><circle cx="35.3" cy="45.3" r="3.600" fill="#b5e0b8" stroke="#58a868" stroke-width="1.100"/></svg><svg style="left:964.5px;top:62px" width="47" height="47" viewBox="0 0 48 48"><path d="M24.0 0.6L29.4 3.9L35.7 3.7L38.7 9.3L44.3 12.3L44.1 18.6L47.4 24.0L44.1 29.4L44.3 35.7L38.7 38.7L35.7 44.3L29.4 44.1L24.0 47.4L18.6 44.1L12.3 44.3L9.3 38.7L3.7 35.7L3.9 29.4L0.6 24.0L3.9 18.6L3.7 12.3L9.3 9.3L12.3 3.7L18.6 3.9Z" fill="#b4dcb8" stroke="#7ab884" stroke-width="1.200" stroke-linejoin="round"/><path d="M13 24.500L20.500 32L35.500 16" stroke="#fff" stroke-width="4" fill="none"/></svg><svg style="left:1026px;top:61px" width="48" height="50" viewBox="0 0 48 50">
<path d="M10.700 6Q11.300 2 15.500 2H33Q37.200 2 37.800 6L43.700 42H4.600Z" fill="#f58484" stroke="#e26060" stroke-width="1"/>
<path d="M24.200 2H33Q37.200 2 37.800 6L43.700 42H24.200Z" fill="#f8a6a6"/>
<path d="M17.300 8.500L12.800 35.500" stroke="#fde0e0" stroke-width="1.300" stroke-linecap="round"/>
<circle cx="23.800" cy="24.800" r="4.200" fill="#f79a9a" stroke="#dc5050" stroke-width="1.200"/>
<rect x="1.500" y="42" width="45" height="5.600" rx="2" fill="#a8b2c4" stroke="#8c98ae" stroke-width="1"/></svg><svg style="left:1102px;top:61px" width="48" height="50" viewBox="0 0 48 50">
<path d="M10.700 6Q11.300 2 15.500 2H33Q37.200 2 37.800 6L43.700 42H4.600Z" fill="#f58484" stroke="#e26060" stroke-width="1"/>
<path d="M24.200 2H33Q37.200 2 37.800 6L43.700 42H24.200Z" fill="#f8a6a6"/>
<path d="M17.300 8.500L12.800 35.500" stroke="#fde0e0" stroke-width="1.300" stroke-linecap="round"/>
<circle cx="23.800" cy="24.800" r="4.200" fill="#f79a9a" stroke="#dc5050" stroke-width="1.200"/>
<rect x="1.500" y="42" width="45" height="5.600" rx="2" fill="#a8b2c4" stroke="#8c98ae" stroke-width="1"/><path d="M21.500 46.500H42Q47.500 46.500 47.500 41.500Q47.500 37 43 36.500Q42.500 28 35 28Q29.500 28 28 33.500Q23.500 32.500 22 37Q17 37.500 17 42Q17 46.500 21.500 46.500Z" fill="#d6e8fa" stroke="#8eaee0" stroke-width="1.200"/></svg><svg style="left:1180px;top:89px" width="6" height="10"><circle cx="5.700" cy="5.300" r="3.600" fill="#c89468"/></svg>
</body></html>
